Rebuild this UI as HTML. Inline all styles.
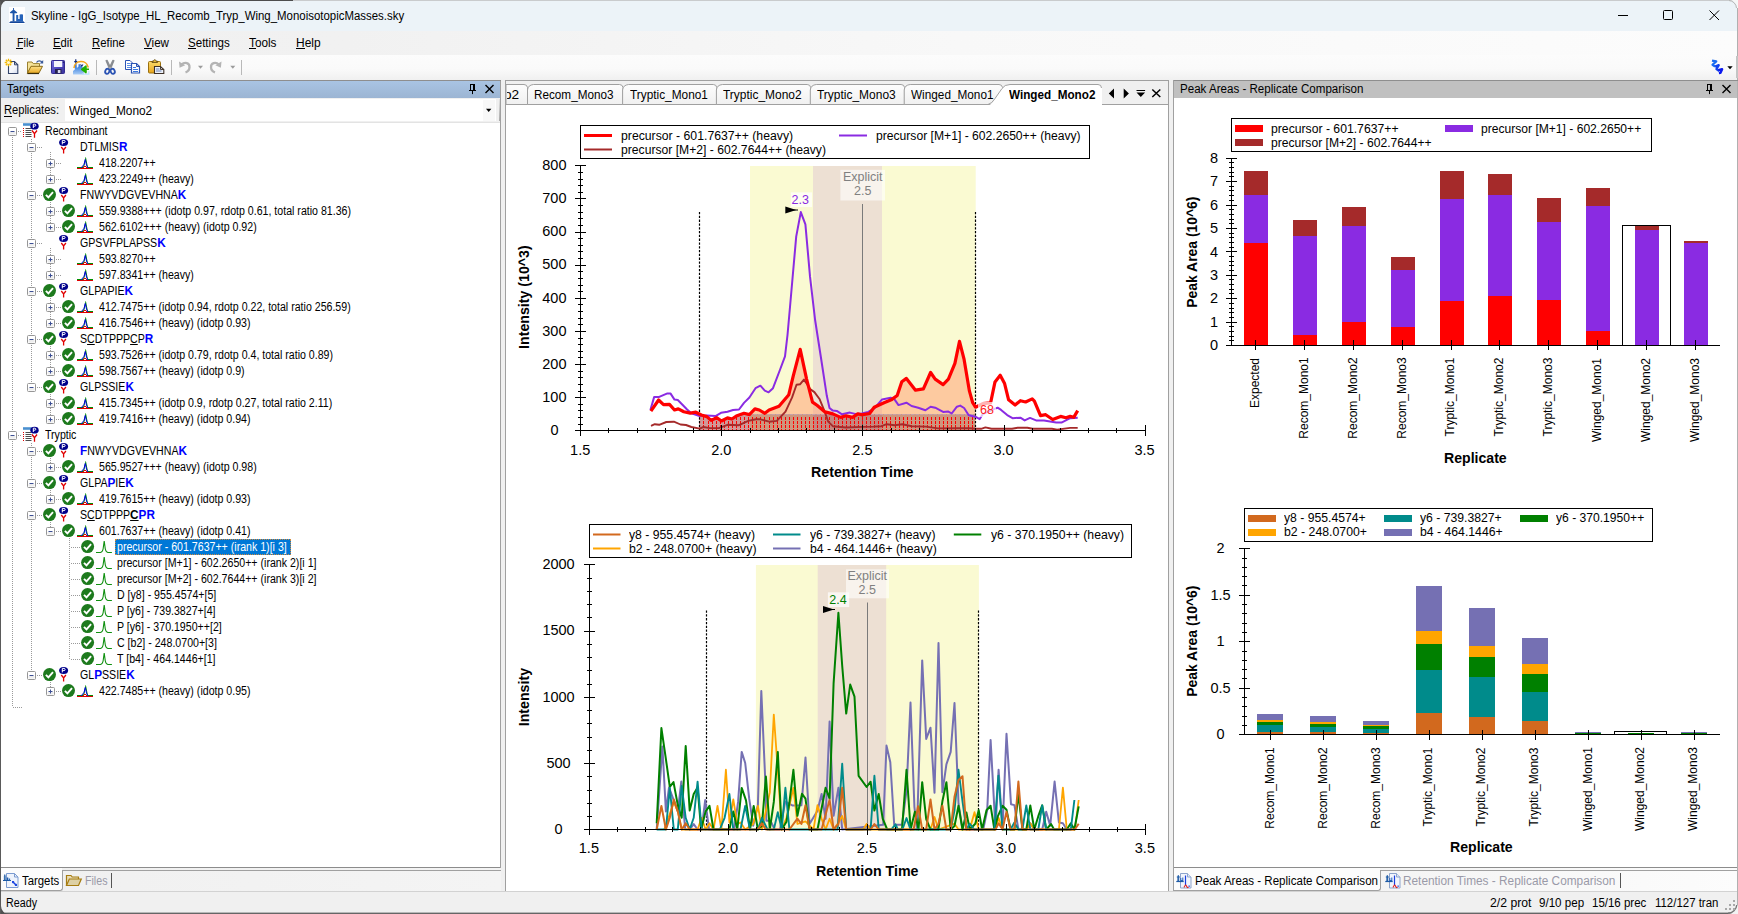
<!DOCTYPE html>
<html><head><meta charset="utf-8"><title>Skyline</title><style>
html,body{margin:0;padding:0;background:#f0f0f0;}
body{width:1738px;height:914px;overflow:hidden;position:relative;font-family:"Liberation Sans",sans-serif;}
.b{position:absolute;box-sizing:border-box;}
.t{position:absolute;white-space:pre;transform-origin:left center;font-family:"Liberation Sans",sans-serif;}
.tr{font-size:12px;line-height:16px;transform:scaleX(0.8835);}
.tr b{font-size:13.3px;}
svg{overflow:visible;}</style></head><body>
<div class="b" style="left:0px;top:0px;width:1738px;height:31px;background:#ecf3f8;"></div>
<div class="b" style="left:0px;top:31px;width:1738px;height:24px;background:linear-gradient(to right,#f0f0f0 0%,#f1f1f1 20%,#f8f8f8 55%,#fcfcfc 100%);"></div>
<div class="b" style="left:0px;top:55px;width:1738px;height:25px;background:linear-gradient(#fcfcfc,#fafafa 55%,#f0f0f0);"></div>
<div class="b" style="left:0px;top:80px;width:1738px;height:834px;background:#f0f0f0;"></div>
<div class="b" style="left:0px;top:891px;width:1738px;height:1px;background:#d2d2d2;"></div>
<div class="b" style="left:0px;top:0px;width:1px;height:914px;background:#5a5a5a;"></div>
<div class="b" style="left:0px;top:0px;width:293px;height:1px;background:#4d4d4d;"></div>
<div class="b" style="left:293px;top:0px;width:1445px;height:1px;background:#c9cbcd;"></div>
<div class="b" style="left:1737px;top:8px;width:1px;height:898px;background:#b0b0b0;"></div>
<div class="b" style="left:5px;top:912px;width:1728px;height:1px;background:#b8b8b8;"></div>
<div class="b" style="left:4px;top:913px;width:1730px;height:1px;background:#666;"></div>
<svg class="b" style="left:0;top:0" width="1738" height="914" viewBox="0 0 1738 914">
<path d="M0 0H9A8 8 0 0 0 1 8V0z" fill="#505050"/>
<path d="M0 914H9A8 8 0 0 1 1 906V914z" fill="#505050"/>
<path d="M1738 0H1729A8 8 0 0 1 1737 8H1738z" fill="#f6f6f6"/><path d="M1729 .5A8 8 0 0 1 1736.500 8" fill="none" stroke="#b5b5b5"/>
<path d="M1738 914H1728A9 9 0 0 0 1737 905H1738z" fill="#f2f2f2"/><path d="M1728 913.200A9 9 0 0 0 1736.800 905" fill="none" stroke="#777" stroke-width="1.400"/>
</svg>
<svg class="b" style="left:0;top:0" width="32" height="31" viewBox="0 0 32 31">
<rect x="9" y="7" width="16" height="17" fill="#fff"/>
<path d="M9 23l1.600-1.700h12.800l1.600 1.700z" fill="#14479a"/>
<rect x="12.600" y="12" width="1.900" height="9.500" fill="#1c56aa"/>
<path d="M9.800 12.400l3.300-2.700h.9l3.300 2.700-.6.800h-6.300z" fill="#1c56aa"/><rect x="13.100" y="8" width=".9" height="2.200" fill="#1c56aa"/>
<path d="M16.200 21.400v-6.300h2v3.800h1.400v-4.300q1.700-.9 3.400 0v6.800z" fill="#2563ba"/>
</svg>
<span class="t" style="left:31.4px;top:8.2px;font-size:12.5px;line-height:16.5px;font-weight:400;color:#000;transform:scaleX(0.9144);">Skyline - IgG_Isotype_HL_Recomb_Tryp_Wing_MonoisotopicMasses.sky</span>
<svg class="b" style="left:1600px;top:0" width="138" height="31" viewBox="0 0 138 31">
<path d="M18 15.5h10" stroke="#000" stroke-width="1"/>
<rect x="63.5" y="10.5" width="9" height="9" rx="1" fill="none" stroke="#000" stroke-width="1"/>
<path d="M109.5 10.5l9.5 9.5M119 10.5l-9.5 9.5" stroke="#000" stroke-width="1"/>
</svg>
<span class="t" style="left:16.5px;top:34.8px;font-size:12.5px;line-height:16.5px;font-weight:400;color:#000;transform:scaleX(0.8583);">File</span>
<div class="b" style="left:16px;top:48px;width:7px;height:1px;background:#000;"></div>
<span class="t" style="left:53.3px;top:34.8px;font-size:12.5px;line-height:16.5px;font-weight:400;color:#000;transform:scaleX(0.9004);">Edit</span>
<div class="b" style="left:53px;top:48px;width:8px;height:1px;background:#000;"></div>
<span class="t" style="left:92.2px;top:34.8px;font-size:12.5px;line-height:16.5px;font-weight:400;color:#000;transform:scaleX(0.9076);">Refine</span>
<div class="b" style="left:92px;top:48px;width:8px;height:1px;background:#000;"></div>
<span class="t" style="left:144.0px;top:34.8px;font-size:12.5px;line-height:16.5px;font-weight:400;color:#000;transform:scaleX(0.9302);">View</span>
<div class="b" style="left:144px;top:48px;width:8px;height:1px;background:#000;"></div>
<span class="t" style="left:188.0px;top:34.8px;font-size:12.5px;line-height:16.5px;font-weight:400;color:#000;transform:scaleX(0.9254);">Settings</span>
<div class="b" style="left:188px;top:48px;width:8px;height:1px;background:#000;"></div>
<span class="t" style="left:249.3px;top:34.8px;font-size:12.5px;line-height:16.5px;font-weight:400;color:#000;transform:scaleX(0.9422);">Tools</span>
<div class="b" style="left:249px;top:48px;width:7px;height:1px;background:#000;"></div>
<span class="t" style="left:296.2px;top:34.8px;font-size:12.5px;line-height:16.5px;font-weight:400;color:#000;transform:scaleX(0.9565);">Help</span>
<div class="b" style="left:296px;top:48px;width:9px;height:1px;background:#000;"></div>
<svg class="b" style="left:0;top:55px" width="260" height="25" viewBox="0 0 260 25">
<defs>
<linearGradient id="gdoc" x1="0" y1="0" x2="1" y2="1"><stop offset="0" stop-color="#fff"/><stop offset=".6" stop-color="#f4f6fb"/><stop offset="1" stop-color="#cfd8ec"/></linearGradient>
<linearGradient id="gfold" x1="0" y1="0" x2="0" y2="1"><stop offset="0" stop-color="#fbe08a"/><stop offset="1" stop-color="#e9a820"/></linearGradient>
<linearGradient id="gsave" x1="0" y1="0" x2="1" y2="1"><stop offset="0" stop-color="#7a74dc"/><stop offset=".5" stop-color="#5048c0"/><stop offset="1" stop-color="#3a329c"/></linearGradient>
<linearGradient id="gsky" x1="0" y1="0" x2="0" y2="1"><stop offset="0" stop-color="#1f4fb8"/><stop offset=".55" stop-color="#4a8ae0"/><stop offset="1" stop-color="#a9cdf6"/></linearGradient>
<linearGradient id="gclip" x1="0" y1="0" x2="0" y2="1"><stop offset="0" stop-color="#fbdc6c"/><stop offset="1" stop-color="#e9a51c"/></linearGradient>
</defs>
<!-- new -->
<path d="M8.500 6.500h6l3.300 3.300v8.700h-9.300z" fill="url(#gdoc)" stroke="#35456b" stroke-width="1.100"/><path d="M14.500 6.500v3.300h3.300" fill="none" stroke="#35456b" stroke-width="1"/>
<path d="M8.500 3.700v7.600M4.700 7.500h7.600M5.800 4.800l5.400 5.400M11.200 4.800l-5.400 5.400" stroke="#f2b800" stroke-width="1.300"/><circle cx="8.500" cy="7.500" r="1.600" fill="#fff6c8"/>
<!-- open -->
<path d="M27.500 17.500v-10.500h4.500l1.200 1.600h6.300v3" fill="#f6e49a" stroke="#9a8030"/><path d="M27.300 18.300l3.700-7h11.500l-3.700 7z" fill="url(#gfold)" stroke="#8a6a14"/><path d="M27.500 18.500h11.500" stroke="#3a2c08" stroke-width="1.200"/>
<path d="M36.500 7.500c1.500-2.300 4.300-2.300 5.800 0" fill="none" stroke="#3a5a9a" stroke-width="1.300"/><path d="M43.200 5v3.600h-3.400z" fill="#3a5a9a"/>
<!-- save -->
<rect x="51.500" y="5.500" width="13" height="13" rx=".8" fill="url(#gsave)" stroke="#342c90"/><rect x="54" y="6" width="8.300" height="6" fill="#f4f5fb"/><rect x="62.800" y="6.500" width="1" height="1.500" fill="#1c1860"/><rect x="55" y="14" width="6.500" height="4.500" fill="#26224e"/><rect x="57.800" y="15" width="2.600" height="3" fill="#d8daf0"/>
<!-- import skyline -->
<path d="M73 19.500v-3.500l1.700-1.200.5-7.300h-.7v-1h.9l.4-2.300.4 2.300h.9v1h-.7l.5 5.500 1.600-1.500v-2.300h1.800v2l1.200-1.500.8.800v1.800l1.500 1v6.200z" fill="url(#gsky)"/><path d="M74.300 6.500h3M75.800 4.200v3.500" stroke="#142c78" stroke-width="1.100"/><path d="M80.500 9.500l1.300 1.500 1.200-1.500" fill="none" stroke="#142c78" stroke-width="1.100"/>
<path d="M74 13c.5-8 12.500-9 14.300-.5" fill="none" stroke="#f5a61c" stroke-width="1.600"/><path d="M82 19.200h6.800v-3" fill="none" stroke="#bfe0ff" stroke-width="1.300"/>
<path d="M89 14.300h-3.500M86 11l-4.300 3.300 4.300 3.300z" fill="#20b000" stroke="#20b000" stroke-width="1.500" stroke-linejoin="round"/>
<!-- sep -->
<path d="M96.500 5v15" stroke="#b9b9b9"/>
<!-- cut -->
<path d="M105.800 5.500l1.500-.3 4 8.500-1.800.8zM114.200 5.500l-1.500-.3-4 8.500 1.800.8z" fill="#8e9196" stroke="#6d7076" stroke-width=".6"/>
<ellipse cx="107.300" cy="16.300" rx="2" ry="2.600" fill="none" stroke="#2c54b4" stroke-width="1.800" transform="rotate(25 107.300 16.300)"/><ellipse cx="112.700" cy="16.300" rx="2" ry="2.600" fill="none" stroke="#2c54b4" stroke-width="1.800" transform="rotate(-25 112.700 16.300)"/>
<!-- copy -->
<path d="M125.500 5.500h4.500l2.500 2.500v6.500h-7z" fill="#fff" stroke="#2c54b4"/><path d="M127 8.500h3.500M127 10.500h4M127 12.500h4" stroke="#5a8ee8"/>
<path d="M131.500 8.500h5l3 3v6.500h-8z" fill="#fff" stroke="#2c54b4" stroke-width="1.200"/><path d="M136.500 8.500v3h3" fill="none" stroke="#2c54b4"/><path d="M133 12.500h3M133 14.500h5M133 16.500h5" stroke="#3a78e0" stroke-width="1.100"/>
<!-- paste -->
<rect x="148.500" y="6.500" width="12" height="11.500" rx="1" fill="url(#gclip)" stroke="#9a7010"/><path d="M152 7.500v-1.300h1.500c0-2 2.500-2 2.500 0h1.500v1.300z" fill="#e8b838" stroke="#5a4410" stroke-width=".8"/>
<path d="M154.500 11.500h6l3.300 3v4h-9.300z" fill="#eef2fa" stroke="#3c3026" stroke-width="1.100"/><path d="M160.500 11.500v3h3.300" fill="none" stroke="#3c3026" stroke-width=".9"/><path d="M156 14h3.500M156 16h5.500" stroke="#6a84b8"/>
<!-- sep -->
<path d="M171.500 5v15" stroke="#b9b9b9"/>
<!-- undo -->
<path d="M181.500 9.800c3.300-3.400 8.300-1.700 8 2.600-.2 2.600-1.800 4.300-4 5" fill="none" stroke="#b4b4b4" stroke-width="2.300"/><path d="M179 6.500l.6 6.300 5.600-2.600z" fill="#b4b4b4"/>
<path d="M198 10.800h5l-2.500 3z" fill="#9c9c9c"/>
<!-- redo -->
<path d="M219 9.800c-3.300-3.400-8.300-1.700-8 2.600.2 2.600 1.800 4.300 4 5" fill="none" stroke="#b4b4b4" stroke-width="2.300"/><path d="M221.500 6.500l-.6 6.300-5.600-2.600z" fill="#b4b4b4"/>
<path d="M230.300 10.800h5l-2.500 3z" fill="#9c9c9c"/>
<path d="M241.500 5v15" stroke="#b9b9b9"/>
</svg>
<svg class="b" style="left:1705px;top:55px" width="33" height="25" viewBox="0 0 33 25">
<path d="M7 5.600l4.300.8-3.800 3.400 2.600 1.800" fill="none" stroke="#1a6cf0" stroke-width="2.200" stroke-linejoin="round"/>
<path d="M10.100 11.600l3.600-1.400-2.200 3.800 2.800 2" fill="none" stroke="#1242ee" stroke-width="2.400" stroke-linejoin="round"/>
<path d="M13.300 15.200l3.800-1-1.600 3.600-1.600 .2" fill="none" stroke="#0a18ee" stroke-width="2.400" stroke-linejoin="round"/>
<path d="M22.300 11.300h5.400l-2.700 3z" fill="#000"/>
<rect x="31" y="1" width="2" height="22" fill="#c4c4c4"/>
</svg>
<div class="b" style="left:1px;top:80px;width:500px;height:1px;background:#8e8e8e;"></div>
<div class="b" style="left:1px;top:81px;width:500px;height:17px;background:linear-gradient(#a9c4e3,#9cb5d3);"></div>
<div class="b" style="left:500px;top:81px;width:1px;height:787px;background:#a0a0a0;"></div>
<span class="t" style="left:6.6px;top:80.8px;font-size:12.5px;line-height:16.5px;font-weight:400;color:#000;transform:scaleX(0.9049);">Targets</span>
<svg class="b" style="left:464px;top:82px" width="34" height="15" viewBox="0 0 34 15">
<path d="M6 2.500h5M6.500 2.500v6M10.500 2.500v6M9.500 2.500v6M5 8.500h7M8.500 8.500v3.600" stroke="#000" fill="none"/>
<path d="M21.500 3l8 8M29.500 3l-8 8" stroke="#000" stroke-width="1.400"/></svg>
<div class="b" style="left:1px;top:98px;width:499px;height:24px;background:#f0f0f0;"></div>
<div class="b" style="left:65px;top:99px;width:431px;height:22px;background:#fff;"></div>
<div class="b" style="left:483px;top:100px;width:12px;height:21px;background:#f8f8f8;"></div>
<div class="b" style="left:499px;top:99px;width:1px;height:22px;background:linear-gradient(#e4e4e4,#a8a8a8);"></div>
<span class="t" style="left:4.2px;top:102.2px;font-size:12.5px;line-height:16.5px;font-weight:400;color:#000;transform:scaleX(0.8893);">Replicates:</span>
<div class="b" style="left:4px;top:116px;width:8px;height:1px;background:#000;"></div>
<span class="t" style="left:69.4px;top:103.2px;font-size:12.5px;line-height:16.5px;font-weight:400;color:#000;transform:scaleX(0.9502);">Winged_Mono2</span>
<svg class="b" style="left:486px;top:108px" width="8" height="5"><path d="M0 .8h5.400l-2.700 3.200z" fill="#000"/></svg>
<div class="b" style="left:1px;top:122px;width:499px;height:746px;background:#fff;"></div>
<div class="b" style="left:1px;top:122px;width:499px;height:1px;background:#e3e3e3;"></div>
<div class="b" style="left:1px;top:867px;width:499px;height:1px;background:#8c8c8c;"></div>
<svg class="b" style="left:0;top:122px" width="500" height="600" viewBox="0 122 500 600"><defs>
<g id="ck"><circle cx="0" cy="0" r="6.500" fill="#1d7a1d"/><path d="M-3.600 .2l2.500 2.600 4.600-5.200" fill="none" stroke="#fff" stroke-width="1.900"/></g>
<g id="mn"><rect x=".5" y=".5" width="8" height="8" rx="1" fill="#fff" stroke="#969696"/><rect x="1.500" y="5" width="6" height="2.500" fill="#ededed"/><path d="M2.500 4.500h4" stroke="#3c4f94" stroke-width="1"/></g>
<g id="pl"><rect x=".5" y=".5" width="8" height="8" rx="1" fill="#fff" stroke="#969696"/><rect x="1.500" y="5" width="6" height="2.500" fill="#ededed"/><path d="M2.500 4.500h4M4.500 2.500v4" stroke="#3c4f94" stroke-width="1"/></g>
<g id="py"><ellipse cx="4.600" cy="3.400" rx="4.500" ry="3.500" fill="#00008b"/><path d="M3.300 5.400v-4h1.700a1.100 1.100 0 0 1 0 2.200h-1.700" fill="none" stroke="#fff" stroke-width="1"/><path d="M2.300 8l2.300 3 2.300-3M4.600 11v3.600" fill="none" stroke="#e00000" stroke-width="1.300"/></g>
<g id="pr"><path d="M0 12.500h16" stroke="#e00000" stroke-width="1"/><path d="M0 11.500h6.500l2-8.500" fill="none" stroke="#009000" stroke-width="1"/><path d="M16 11.500h-5.500l-2-10" fill="none" stroke="#009000" stroke-width="1"/><path d="M4 12l3-3.500 1.300-5 1.200 5.500 1.500 3" fill="none" stroke="#0000e0" stroke-width="1"/><path d="M5.500 12.500l2.500-2.500 2.500 2.500" fill="none" stroke="#e00000" stroke-width="1"/></g>
<g id="tr"><path d="M0 12.500h4.500q2-.3 2.600-3.500l1.100-8 1.100 8q.6 3.200 2.600 3.500h4" fill="none" stroke="#109010" stroke-width="1.100"/></g>
<g id="pg"><path d="M0 1.500h8.500" stroke="#4a90d0" stroke-width="2.600"/><path d="M2.500 5.500h6M2.500 7.500h6M2.500 9.500h6M2.500 11.500h6M2.500 13.500h6" stroke="#4d4d4d" stroke-width="1"/><path d="M.5 5v10" stroke="#e00000" stroke-dasharray="1 1"/><ellipse cx="11.500" cy="3.200" rx="4.200" ry="3.400" fill="#00008b"/><path d="M10.300 5v-3.800h1.500a1 1 0 0 1 0 2h-1.500" fill="none" stroke="#fff" stroke-width="1"/><path d="M9 7.500l2.500 3.200 2.500-3.200M11.500 10.700v4" fill="none" stroke="#e00000" stroke-width="1.300"/></g>
</defs><path d="M12.5 137V707M13 707.5H23M18 131.5H22M37 147.5H42M56 163.5H61M56 179.5H61M37 195.5H43M56 211.5H62M56 227.5H62M37 243.5H42M56 259.5H61M56 275.5H61M37 291.5H43M56 307.5H62M56 323.5H62M37 339.5H43M56 355.5H62M56 371.5H62M37 387.5H43M56 403.5H62M56 419.5H62M18 435.5H22M37 451.5H43M56 467.5H62M37 483.5H43M56 499.5H62M37 515.5H43M56 531.5H62M71 547.5H80M71 563.5H80M71 579.5H80M71 595.5H80M71 611.5H80M71 627.5H80M71 643.5H80M71 659.5H80M37 675.5H43M56 691.5H62M31.5 139V383M50.5 152V175M50.5 200V223M50.5 248V271M50.5 296V319M50.5 344V367M50.5 392V415M31.5 443V671M50.5 456V463M50.5 488V495M50.5 520V527M69.5 538V659.5M50.5 680V687" stroke="#9a9a9a" stroke-width="1" stroke-dasharray="1 1" fill="none"/><use href="#mn" x="8" y="127"/><use href="#pg" x="23" y="123"/><use href="#mn" x="27" y="143"/><use href="#py" x="59" y="139"/><use href="#pl" x="46" y="159"/><use href="#pr" x="77" y="156"/><use href="#pl" x="46" y="175"/><use href="#pr" x="77" y="172"/><use href="#mn" x="27" y="191"/><use href="#ck" x="49.5" y="194.6"/><use href="#py" x="59" y="187"/><use href="#pl" x="46" y="207"/><use href="#ck" x="68.5" y="210.6"/><use href="#pr" x="77" y="204"/><use href="#pl" x="46" y="223"/><use href="#ck" x="68.5" y="226.6"/><use href="#pr" x="77" y="220"/><use href="#mn" x="27" y="239"/><use href="#py" x="59" y="235"/><use href="#pl" x="46" y="255"/><use href="#pr" x="77" y="252"/><use href="#pl" x="46" y="271"/><use href="#pr" x="77" y="268"/><use href="#mn" x="27" y="287"/><use href="#ck" x="49.5" y="290.6"/><use href="#py" x="59" y="283"/><use href="#pl" x="46" y="303"/><use href="#ck" x="68.5" y="306.6"/><use href="#pr" x="77" y="300"/><use href="#pl" x="46" y="319"/><use href="#ck" x="68.5" y="322.6"/><use href="#pr" x="77" y="316"/><use href="#mn" x="27" y="335"/><use href="#ck" x="49.5" y="338.6"/><use href="#py" x="59" y="331"/><use href="#pl" x="46" y="351"/><use href="#ck" x="68.5" y="354.6"/><use href="#pr" x="77" y="348"/><use href="#pl" x="46" y="367"/><use href="#ck" x="68.5" y="370.6"/><use href="#pr" x="77" y="364"/><use href="#mn" x="27" y="383"/><use href="#ck" x="49.5" y="386.6"/><use href="#py" x="59" y="379"/><use href="#pl" x="46" y="399"/><use href="#ck" x="68.5" y="402.6"/><use href="#pr" x="77" y="396"/><use href="#pl" x="46" y="415"/><use href="#ck" x="68.5" y="418.6"/><use href="#pr" x="77" y="412"/><use href="#mn" x="8" y="431"/><use href="#pg" x="23" y="427"/><use href="#mn" x="27" y="447"/><use href="#ck" x="49.5" y="450.6"/><use href="#py" x="59" y="443"/><use href="#pl" x="46" y="463"/><use href="#ck" x="68.5" y="466.6"/><use href="#pr" x="77" y="460"/><use href="#mn" x="27" y="479"/><use href="#ck" x="49.5" y="482.6"/><use href="#py" x="59" y="475"/><use href="#pl" x="46" y="495"/><use href="#ck" x="68.5" y="498.6"/><use href="#pr" x="77" y="492"/><use href="#mn" x="27" y="511"/><use href="#ck" x="49.5" y="514.6"/><use href="#py" x="59" y="507"/><use href="#mn" x="46" y="527"/><use href="#ck" x="68.5" y="530.6"/><use href="#pr" x="77" y="524"/><use href="#ck" x="87.6" y="546.6"/><use href="#tr" x="96" y="540"/><use href="#ck" x="87.6" y="562.6"/><use href="#tr" x="96" y="556"/><use href="#ck" x="87.6" y="578.6"/><use href="#tr" x="96" y="572"/><use href="#ck" x="87.6" y="594.6"/><use href="#tr" x="96" y="588"/><use href="#ck" x="87.6" y="610.6"/><use href="#tr" x="96" y="604"/><use href="#ck" x="87.6" y="626.6"/><use href="#tr" x="96" y="620"/><use href="#ck" x="87.6" y="642.6"/><use href="#tr" x="96" y="636"/><use href="#ck" x="87.6" y="658.6"/><use href="#tr" x="96" y="652"/><use href="#mn" x="27" y="671"/><use href="#ck" x="49.5" y="674.6"/><use href="#py" x="59" y="667"/><use href="#pl" x="46" y="687"/><use href="#ck" x="68.5" y="690.6"/><use href="#pr" x="77" y="684"/></svg>
<span class="t tr" style="left:44.8px;top:123px;color:#000">Recombinant</span>
<span class="t tr" style="left:80px;top:139px;color:#000">DTLMIS<b style="color:#00f">R</b></span>
<span class="t tr" style="left:99px;top:155px;color:#000">418.2207++</span>
<span class="t tr" style="left:99px;top:171px;color:#000">423.2249++ (heavy)</span>
<span class="t tr" style="left:80px;top:187px;color:#000">FNWYVDGVEVHNA<b style="color:#00f">K</b></span>
<span class="t tr" style="left:99px;top:203px;color:#000">559.9388+++ (idotp 0.97, rdotp 0.61, total ratio 81.36)</span>
<span class="t tr" style="left:99px;top:219px;color:#000">562.6102+++ (heavy) (idotp 0.92)</span>
<span class="t tr" style="left:80px;top:235px;color:#000">GPSVFPLAPSS<b style="color:#00f">K</b></span>
<span class="t tr" style="left:99px;top:251px;color:#000">593.8270++</span>
<span class="t tr" style="left:99px;top:267px;color:#000">597.8341++ (heavy)</span>
<span class="t tr" style="left:80px;top:283px;color:#000">GLPAPIE<b style="color:#00f">K</b></span>
<span class="t tr" style="left:99px;top:299px;color:#000">412.7475++ (idotp 0.94, rdotp 0.22, total ratio 256.59)</span>
<span class="t tr" style="left:99px;top:315px;color:#000">416.7546++ (heavy) (idotp 0.93)</span>
<span class="t tr" style="left:80px;top:331px;color:#000">S<u>C</u>DTPPP<u>C</u>P<b style="color:#00f">R</b></span>
<span class="t tr" style="left:99px;top:347px;color:#000">593.7526++ (idotp 0.79, rdotp 0.4, total ratio 0.89)</span>
<span class="t tr" style="left:99px;top:363px;color:#000">598.7567++ (heavy) (idotp 0.9)</span>
<span class="t tr" style="left:80px;top:379px;color:#000">GLPSSIE<b style="color:#00f">K</b></span>
<span class="t tr" style="left:99px;top:395px;color:#000">415.7345++ (idotp 0.9, rdotp 0.27, total ratio 2.11)</span>
<span class="t tr" style="left:99px;top:411px;color:#000">419.7416++ (heavy) (idotp 0.94)</span>
<span class="t tr" style="left:44.8px;top:427px;color:#000">Tryptic</span>
<span class="t tr" style="left:80px;top:443px;color:#000"><b style="color:#00f">F</b>NWYVDGVEVHNA<b style="color:#00f">K</b></span>
<span class="t tr" style="left:99px;top:459px;color:#000">565.9527+++ (heavy) (idotp 0.98)</span>
<span class="t tr" style="left:80px;top:475px;color:#000">GLPA<b style="color:#00f">P</b>IE<b style="color:#00f">K</b></span>
<span class="t tr" style="left:99px;top:491px;color:#000">419.7615++ (heavy) (idotp 0.93)</span>
<span class="t tr" style="left:80px;top:507px;color:#000">S<u>C</u>DTPPP<b><u>C</u></b><b style="color:#00f">PR</b></span>
<span class="t tr" style="left:99px;top:523px;color:#000">601.7637++ (heavy) (idotp 0.41)</span>
<div class="b" style="left:115px;top:539px;width:176px;height:16px;background:#0078d7;outline:1px dotted #d28a3c;outline-offset:-1px;"></div>
<span class="t tr" style="left:117.4px;top:539px;color:#fff">precursor - 601.7637++ (irank 1)[i 3]</span>
<span class="t tr" style="left:117.4px;top:555px;color:#000">precursor [M+1] - 602.2650++ (irank 2)[i 1]</span>
<span class="t tr" style="left:117.4px;top:571px;color:#000">precursor [M+2] - 602.7644++ (irank 3)[i 2]</span>
<span class="t tr" style="left:117.4px;top:587px;color:#000">D [y8] - 955.4574+[5]</span>
<span class="t tr" style="left:117.4px;top:603px;color:#000">P [y6] - 739.3827+[4]</span>
<span class="t tr" style="left:117.4px;top:619px;color:#000">P [y6] - 370.1950++[2]</span>
<span class="t tr" style="left:117.4px;top:635px;color:#000">C [b2] - 248.0700+[3]</span>
<span class="t tr" style="left:117.4px;top:651px;color:#000">T [b4] - 464.1446+[1]</span>
<span class="t tr" style="left:80px;top:667px;color:#000">GL<b style="color:#00f">P</b>SSIE<b style="color:#00f">K</b></span>
<span class="t tr" style="left:99px;top:683px;color:#000">422.7485++ (heavy) (idotp 0.95)</span>
<div class="b" style="left:1px;top:868px;width:500px;height:23px;background:linear-gradient(to right,#f0f0f0,#f4f4f4);"></div>
<div class="b" style="left:1px;top:870px;width:500px;height:1px;background:#a0a0a0;"></div>
<div class="b" style="left:1px;top:868px;width:61px;height:3px;background:#fcfcfc;"></div>
<div class="b" style="left:1px;top:870px;width:62px;height:21px;background:#fcfcfc;border-right:1px solid #a0a0a0;border-bottom:1px solid #a0a0a0;border-radius:0 0 3px 0;"></div>
<svg class="b" style="left:2px;top:872px" width="18" height="17" viewBox="0 0 18 17">
<path d="M4.500 1.500h8l3.500 3.500v10.500h-11.500z" fill="#eef3fc" stroke="#7b9bd0"/><path d="M12.500 1.500v3.500h3.500" fill="none" stroke="#7b9bd0"/>
<path d="M1 8.500h8" stroke="#1c5aa6"/><path d="M2.800 2.500l.5 1.500v4h-1v-4z" fill="#1c5aa6" stroke="#1c5aa6" stroke-width=".6"/><rect x="4.800" y="5.500" width="1.500" height="3" fill="#1c5aa6"/><rect x="6.800" y="6.500" width="1.300" height="2" fill="#2a6ab8"/>
<path d="M10.500 9.500l4 4" stroke="#1a44e0" stroke-width="1.600"/><path d="M10 9h2.500l-2.500 2.500zM15 14h-2.500l2.500-2.500z" fill="#1a44e0"/></svg>
<span class="t" style="left:21.7px;top:872.8px;font-size:12.5px;line-height:16.5px;font-weight:400;color:#000;transform:scaleX(0.9098);">Targets</span>
<svg class="b" style="left:65px;top:873px" width="18" height="15" viewBox="0 0 18 15">
<path d="M1.500 12.500v-10h4.500l1.200 1.500h6.300v2" fill="#e8dcb8" stroke="#a67c10" stroke-width="1.200"/><path d="M1.500 12.500l2.800-6.500h12l-2.800 6.500z" fill="#ddd0a4" stroke="#a67c10" stroke-width="1.200"/></svg>
<span class="t" style="left:84.5px;top:872.8px;font-size:12.5px;line-height:16.5px;font-weight:400;color:#9a9aa8;transform:scaleX(0.8521);">Files</span>
<div class="b" style="left:111px;top:873px;width:1px;height:15px;background:#555;"></div>
<span class="t" style="left:5.6px;top:894.8px;font-size:12.5px;line-height:16.5px;font-weight:400;color:#000;transform:scaleX(0.8578);">Ready</span>
<div class="b" style="left:505px;top:80px;width:664px;height:1px;background:#a0a0a0;"></div>
<div class="b" style="left:505px;top:80px;width:1px;height:811px;background:#a0a0a0;"></div>
<div class="b" style="left:1168px;top:80px;width:1px;height:811px;background:#a0a0a0;"></div>
<div class="b" style="left:506px;top:81px;width:662px;height:24px;background:#f0f0f0;"></div>
<div class="b" style="left:506px;top:105px;width:662px;height:786px;background:#fff;"></div>
<svg class="b" style="left:506px;top:81px" width="662" height="25" viewBox="506 81 662 25"><defs><linearGradient id="tg" x1="0" y1="0" x2="0" y2="1"><stop offset="0" stop-color="#fdfdfd"/><stop offset="1" stop-color="#f0f0f0"/></linearGradient></defs><path d="M506 104.500H1168" stroke="#a0a0a0"/><path d="M506 84.500H524q3 0 3.500 3V104.500H506z" fill="url(#tg)" stroke="#a0a0a0"/><path d="M527.5 104.500V90q.5-5 6-5.500H619.5q3 0 3.500 3V104.500z" fill="url(#tg)" stroke="#a0a0a0"/><path d="M622.6 104.500V90q.5-5 6-5.500H713.3q3 0 3.500 3V104.500z" fill="url(#tg)" stroke="#a0a0a0"/><path d="M716.4 104.500V90q.5-5 6-5.500H807.2q3 0 3.500 3V104.500z" fill="url(#tg)" stroke="#a0a0a0"/><path d="M810.3 104.500V90q.5-5 6-5.500H901.1q3 0 3.500 3V104.500z" fill="url(#tg)" stroke="#a0a0a0"/><path d="M904.2 104.500V90q.5-5 6-5.500H999.0q3 0 3.500 3V104.500z" fill="url(#tg)" stroke="#a0a0a0"/><path d="M988 105.500q4-1 7-6l7-11q2.500-4 8-4H1098q4 0 4 4V105.500z" fill="#fff" stroke="none"/><path d="M988 104.500q4-1 7-6l7-10q2.500-4 8-4H1098q3.500 0 3.500 3.500" fill="none" stroke="#a0a0a0"/><path d="M1114 88.500v10l-5.200-5zM1123.700 88.500v10l5.200-5zM1136.500 90h8.600v1h-8.600zM1136.500 92.500h8.600l-4.300 4.400z" fill="#000"/><path d="M1152.300 89.500l8 7.500M1160.300 89.500l-8 7.500" stroke="#000" stroke-width="1.500"/></svg>
<div class="b" style="left:507px;top:85px;width:20px;height:19px;overflow:hidden"><span class="t" style="left:-3.2px;top:2.2px;font-size:12.5px;line-height:16.5px;font-weight:400;color:#000;transform:scaleX(1.0930);">o2</span></div>
<span class="t" style="left:534.4px;top:87.2px;font-size:12.5px;line-height:16.5px;font-weight:400;color:#000;transform:scaleX(0.9379);">Recom_Mono3</span>
<span class="t" style="left:629.5px;top:87.2px;font-size:12.5px;line-height:16.5px;font-weight:400;color:#000;transform:scaleX(0.9475);">Tryptic_Mono1</span>
<span class="t" style="left:723.4px;top:87.2px;font-size:12.5px;line-height:16.5px;font-weight:400;color:#000;transform:scaleX(0.9560);">Tryptic_Mono2</span>
<span class="t" style="left:817.3px;top:87.2px;font-size:12.5px;line-height:16.5px;font-weight:400;color:#000;transform:scaleX(0.9572);">Tryptic_Mono3</span>
<span class="t" style="left:911.2px;top:87.2px;font-size:12.5px;line-height:16.5px;font-weight:400;color:#000;transform:scaleX(0.9422);">Winged_Mono1</span>
<span class="t" style="left:1009.4px;top:87.2px;font-size:12.5px;line-height:16.5px;font-weight:700;color:#000;transform:scaleX(0.9366);">Winged_Mono2</span>
<svg class="b" style="left:506px;top:104px" width="663" height="390" viewBox="506 104 663 390"><rect x="750" y="166" width="225.700" height="264.500" fill="#fafad2"/><rect x="813" y="166" width="69" height="264.500" fill="#ede0d3"/><path d="M862.5 204V430" stroke="#7a7a7a" stroke-width="1"/><clipPath id="cpA"><rect x="690" y="160" width="300" height="254"/></clipPath><polygon clip-path="url(#cpA)" points="699.5,414.1 701.3,415.0 706.8,416.6 711.1,420.4 716.6,417.7 721.5,421.0 727.5,417.9 731.9,419.0 736.3,416.1 744.0,413.3 749.4,414.6 754.9,408.9 759.3,410.0 764.8,413.3 769.1,410.0 779.0,406.2 788.8,394.7 793.2,376.1 800.2,349.4 806.6,379.1 812.5,402.1 817.0,405.3 825.0,411.9 832.8,413.9 840.7,417.4 846.0,415.8 852.5,417.4 857.8,413.9 861.7,414.8 869.6,413.5 874.2,407.3 884.0,402.7 891.9,399.4 897.2,395.5 901.8,381.7 906.4,378.4 915.5,390.2 923.4,388.9 930.6,372.5 935.2,379.1 943.1,384.6 948.4,379.1 954.9,363.3 959.5,341.3 964.1,359.4 969.4,390.9 972.7,402.7 975.3,406.9 975.3,430.5 699.5,430.5" fill="#ff9a6e" fill-opacity=".5"/><clipPath id="cpB"><polygon points="699.5,414.1 700.1,414.4 700.7,414.7 701.3,415.0 701.8,415.1 702.3,415.3 702.8,415.4 703.3,415.6 703.8,415.7 704.3,415.9 704.8,416.0 705.3,416.2 705.8,416.3 706.3,416.5 706.8,416.6 707.3,417.1 707.9,417.6 708.4,418.0 709.0,418.5 709.5,419.0 710.0,419.4 710.6,419.9 711.1,420.4 711.6,420.2 712.1,419.9 712.6,419.7 713.1,419.4 713.6,419.2 714.1,418.9 714.6,418.7 715.1,418.4 715.6,418.2 716.1,417.9 716.6,417.7 717.1,418.1 717.7,418.4 718.2,418.8 718.8,419.2 719.3,419.5 719.9,419.9 720.4,420.3 721.0,420.6 721.5,421.0 722.0,420.7 722.5,420.5 723.0,420.2 723.5,420.0 724.0,419.7 724.5,419.4 725.0,419.2 725.5,418.9 726.0,418.7 726.5,418.4 727.0,418.2 727.5,417.9 728.0,418.0 728.6,418.2 729.1,418.3 729.7,418.4 730.2,418.6 730.8,418.7 731.4,418.9 731.9,419.0 732.4,418.6 733.0,418.3 733.5,417.9 734.1,417.6 734.6,417.2 735.2,416.8 735.8,416.5 736.3,416.1 736.8,415.9 737.3,415.7 737.8,415.5 738.4,415.4 738.9,415.2 739.4,415.0 739.9,414.8 740.4,414.6 740.9,414.4 741.4,414.2 741.9,414.0 742.5,414.0 743.0,414.0 743.5,414.0 744.0,414.0 744.5,414.0 745.1,414.0 745.6,414.0 746.2,414.0 746.7,414.0 747.2,414.1 747.8,414.2 748.3,414.3 748.9,414.5 749.4,414.6 749.9,414.1 750.4,414.0 750.9,414.0 751.4,414.0 751.9,414.0 752.4,414.0 752.9,414.0 753.4,414.0 753.9,414.0 754.4,414.0 754.9,414.0 755.4,414.0 756.0,414.0 756.5,414.0 757.1,414.0 757.6,414.0 758.2,414.0 758.8,414.0 759.3,414.0 759.8,414.0 760.3,414.0 760.8,414.0 761.3,414.0 761.8,414.0 762.3,414.0 762.8,414.0 763.3,414.0 763.8,414.0 764.3,414.0 764.8,414.0 765.3,414.0 765.9,414.0 766.4,414.0 767.0,414.0 767.5,414.0 768.0,414.0 768.6,414.0 769.1,414.0 769.6,414.0 770.1,414.0 770.7,414.0 771.2,414.0 771.7,414.0 772.2,414.0 772.7,414.0 773.3,414.0 773.8,414.0 774.3,414.0 774.8,414.0 775.4,414.0 775.9,414.0 776.4,414.0 776.9,414.0 777.4,414.0 778.0,414.0 778.5,414.0 779.0,414.0 779.5,414.0 780.0,414.0 780.5,414.0 781.1,414.0 781.6,414.0 782.1,414.0 782.6,414.0 783.1,414.0 783.6,414.0 784.2,414.0 784.7,414.0 785.2,414.0 785.7,414.0 786.2,414.0 786.7,414.0 787.3,414.0 787.8,414.0 788.3,414.0 788.8,414.0 789.3,414.0 789.9,414.0 790.5,414.0 791.0,414.0 791.5,414.0 792.1,414.0 792.7,414.0 793.2,414.0 793.7,414.0 794.2,414.0 794.7,414.0 795.2,414.0 795.7,414.0 796.2,414.0 796.7,414.0 797.2,414.0 797.7,414.0 798.2,414.0 798.7,414.0 799.2,414.0 799.7,414.0 800.2,414.0 800.7,414.0 801.3,414.0 801.8,414.0 802.3,414.0 802.9,414.0 803.4,414.0 803.9,414.0 804.5,414.0 805.0,414.0 805.5,414.0 806.1,414.0 806.6,414.0 807.1,414.0 807.7,414.0 808.2,414.0 808.7,414.0 809.3,414.0 809.8,414.0 810.4,414.0 810.9,414.0 811.4,414.0 812.0,414.0 812.5,414.0 813.0,414.0 813.5,414.0 814.0,414.0 814.5,414.0 815.0,414.0 815.5,414.0 816.0,414.0 816.5,414.0 817.0,414.0 817.5,414.0 818.0,414.0 818.5,414.0 819.0,414.0 819.5,414.0 820.0,414.0 820.5,414.0 821.0,414.0 821.5,414.0 822.0,414.0 822.5,414.0 823.0,414.0 823.5,414.0 824.0,414.0 824.5,414.0 825.0,414.0 825.5,414.0 826.0,414.0 826.6,414.0 827.1,414.0 827.6,414.0 828.1,414.0 828.6,414.0 829.2,414.0 829.7,414.0 830.2,414.0 830.7,414.0 831.2,414.0 831.8,414.0 832.3,414.0 832.8,414.0 833.3,414.1 833.9,414.4 834.4,414.6 834.9,414.8 835.4,415.1 836.0,415.3 836.5,415.5 837.0,415.8 837.5,416.0 838.1,416.2 838.6,416.5 839.1,416.7 839.6,416.9 840.2,417.2 840.7,417.4 841.2,417.2 841.8,417.1 842.3,416.9 842.8,416.8 843.4,416.6 843.9,416.4 844.4,416.3 844.9,416.1 845.5,416.0 846.0,415.8 846.5,415.9 847.0,416.0 847.5,416.2 848.0,416.3 848.5,416.4 849.0,416.5 849.5,416.7 850.0,416.8 850.5,416.9 851.0,417.0 851.5,417.2 852.0,417.3 852.5,417.4 853.0,417.0 853.6,416.7 854.1,416.3 854.6,416.0 855.1,415.6 855.7,415.3 856.2,414.9 856.7,414.6 857.3,414.2 857.8,414.0 858.4,414.0 858.9,414.2 859.5,414.3 860.0,414.4 860.6,414.5 861.1,414.7 861.7,414.8 862.2,414.7 862.8,414.6 863.3,414.5 863.8,414.5 864.3,414.4 864.9,414.3 865.4,414.2 865.9,414.1 866.4,414.0 867.0,414.0 867.5,414.0 868.0,414.0 868.5,414.0 869.1,414.0 869.6,414.0 870.1,414.0 870.6,414.0 871.1,414.0 871.6,414.0 872.2,414.0 872.7,414.0 873.2,414.0 873.7,414.0 874.2,414.0 874.7,414.0 875.2,414.0 875.7,414.0 876.3,414.0 876.8,414.0 877.3,414.0 877.8,414.0 878.3,414.0 878.8,414.0 879.4,414.0 879.9,414.0 880.4,414.0 880.9,414.0 881.4,414.0 881.9,414.0 882.5,414.0 883.0,414.0 883.5,414.0 884.0,414.0 884.5,414.0 885.1,414.0 885.6,414.0 886.1,414.0 886.6,414.0 887.2,414.0 887.7,414.0 888.2,414.0 888.7,414.0 889.3,414.0 889.8,414.0 890.3,414.0 890.8,414.0 891.4,414.0 891.9,414.0 892.4,414.0 893.0,414.0 893.5,414.0 894.0,414.0 894.5,414.0 895.1,414.0 895.6,414.0 896.1,414.0 896.7,414.0 897.2,414.0 897.7,414.0 898.2,414.0 898.7,414.0 899.2,414.0 899.8,414.0 900.3,414.0 900.8,414.0 901.3,414.0 901.8,414.0 902.3,414.0 902.8,414.0 903.3,414.0 903.8,414.0 904.4,414.0 904.9,414.0 905.4,414.0 905.9,414.0 906.4,414.0 906.9,414.0 907.4,414.0 907.9,414.0 908.4,414.0 908.9,414.0 909.4,414.0 909.9,414.0 910.4,414.0 911.0,414.0 911.5,414.0 912.0,414.0 912.5,414.0 913.0,414.0 913.5,414.0 914.0,414.0 914.5,414.0 915.0,414.0 915.5,414.0 916.0,414.0 916.6,414.0 917.1,414.0 917.6,414.0 918.1,414.0 918.7,414.0 919.2,414.0 919.7,414.0 920.2,414.0 920.8,414.0 921.3,414.0 921.8,414.0 922.3,414.0 922.9,414.0 923.4,414.0 923.9,414.0 924.4,414.0 924.9,414.0 925.5,414.0 926.0,414.0 926.5,414.0 927.0,414.0 927.5,414.0 928.0,414.0 928.5,414.0 929.1,414.0 929.6,414.0 930.1,414.0 930.6,414.0 931.1,414.0 931.6,414.0 932.1,414.0 932.6,414.0 933.2,414.0 933.7,414.0 934.2,414.0 934.7,414.0 935.2,414.0 935.7,414.0 936.3,414.0 936.8,414.0 937.3,414.0 937.8,414.0 938.4,414.0 938.9,414.0 939.4,414.0 939.9,414.0 940.5,414.0 941.0,414.0 941.5,414.0 942.0,414.0 942.6,414.0 943.1,414.0 943.6,414.0 944.2,414.0 944.7,414.0 945.2,414.0 945.8,414.0 946.3,414.0 946.8,414.0 947.3,414.0 947.9,414.0 948.4,414.0 948.9,414.0 949.4,414.0 949.9,414.0 950.4,414.0 950.9,414.0 951.4,414.0 951.9,414.0 952.4,414.0 952.9,414.0 953.4,414.0 953.9,414.0 954.4,414.0 954.9,414.0 955.4,414.0 955.9,414.0 956.4,414.0 956.9,414.0 957.5,414.0 958.0,414.0 958.5,414.0 959.0,414.0 959.5,414.0 960.0,414.0 960.5,414.0 961.0,414.0 961.5,414.0 962.1,414.0 962.6,414.0 963.1,414.0 963.6,414.0 964.1,414.0 964.6,414.0 965.2,414.0 965.7,414.0 966.2,414.0 966.8,414.0 967.3,414.0 967.8,414.0 968.3,414.0 968.9,414.0 969.4,414.0 970.0,414.0 970.5,414.0 971.0,414.0 971.6,414.0 972.2,414.0 972.7,414.0 973.2,414.0 973.7,414.0 974.3,414.0 974.8,414.0 975.3,414.0 975.3,430.5 699.5,430.5"/></clipPath><polygon points="699.5,414.1 700.1,414.4 700.7,414.7 701.3,415.0 701.8,415.1 702.3,415.3 702.8,415.4 703.3,415.6 703.8,415.7 704.3,415.9 704.8,416.0 705.3,416.2 705.8,416.3 706.3,416.5 706.8,416.6 707.3,417.1 707.9,417.6 708.4,418.0 709.0,418.5 709.5,419.0 710.0,419.4 710.6,419.9 711.1,420.4 711.6,420.2 712.1,419.9 712.6,419.7 713.1,419.4 713.6,419.2 714.1,418.9 714.6,418.7 715.1,418.4 715.6,418.2 716.1,417.9 716.6,417.7 717.1,418.1 717.7,418.4 718.2,418.8 718.8,419.2 719.3,419.5 719.9,419.9 720.4,420.3 721.0,420.6 721.5,421.0 722.0,420.7 722.5,420.5 723.0,420.2 723.5,420.0 724.0,419.7 724.5,419.4 725.0,419.2 725.5,418.9 726.0,418.7 726.5,418.4 727.0,418.2 727.5,417.9 728.0,418.0 728.6,418.2 729.1,418.3 729.7,418.4 730.2,418.6 730.8,418.7 731.4,418.9 731.9,419.0 732.4,418.6 733.0,418.3 733.5,417.9 734.1,417.6 734.6,417.2 735.2,416.8 735.8,416.5 736.3,416.1 736.8,415.9 737.3,415.7 737.8,415.5 738.4,415.4 738.9,415.2 739.4,415.0 739.9,414.8 740.4,414.6 740.9,414.4 741.4,414.2 741.9,414.0 742.5,414.0 743.0,414.0 743.5,414.0 744.0,414.0 744.5,414.0 745.1,414.0 745.6,414.0 746.2,414.0 746.7,414.0 747.2,414.1 747.8,414.2 748.3,414.3 748.9,414.5 749.4,414.6 749.9,414.1 750.4,414.0 750.9,414.0 751.4,414.0 751.9,414.0 752.4,414.0 752.9,414.0 753.4,414.0 753.9,414.0 754.4,414.0 754.9,414.0 755.4,414.0 756.0,414.0 756.5,414.0 757.1,414.0 757.6,414.0 758.2,414.0 758.8,414.0 759.3,414.0 759.8,414.0 760.3,414.0 760.8,414.0 761.3,414.0 761.8,414.0 762.3,414.0 762.8,414.0 763.3,414.0 763.8,414.0 764.3,414.0 764.8,414.0 765.3,414.0 765.9,414.0 766.4,414.0 767.0,414.0 767.5,414.0 768.0,414.0 768.6,414.0 769.1,414.0 769.6,414.0 770.1,414.0 770.7,414.0 771.2,414.0 771.7,414.0 772.2,414.0 772.7,414.0 773.3,414.0 773.8,414.0 774.3,414.0 774.8,414.0 775.4,414.0 775.9,414.0 776.4,414.0 776.9,414.0 777.4,414.0 778.0,414.0 778.5,414.0 779.0,414.0 779.5,414.0 780.0,414.0 780.5,414.0 781.1,414.0 781.6,414.0 782.1,414.0 782.6,414.0 783.1,414.0 783.6,414.0 784.2,414.0 784.7,414.0 785.2,414.0 785.7,414.0 786.2,414.0 786.7,414.0 787.3,414.0 787.8,414.0 788.3,414.0 788.8,414.0 789.3,414.0 789.9,414.0 790.5,414.0 791.0,414.0 791.5,414.0 792.1,414.0 792.7,414.0 793.2,414.0 793.7,414.0 794.2,414.0 794.7,414.0 795.2,414.0 795.7,414.0 796.2,414.0 796.7,414.0 797.2,414.0 797.7,414.0 798.2,414.0 798.7,414.0 799.2,414.0 799.7,414.0 800.2,414.0 800.7,414.0 801.3,414.0 801.8,414.0 802.3,414.0 802.9,414.0 803.4,414.0 803.9,414.0 804.5,414.0 805.0,414.0 805.5,414.0 806.1,414.0 806.6,414.0 807.1,414.0 807.7,414.0 808.2,414.0 808.7,414.0 809.3,414.0 809.8,414.0 810.4,414.0 810.9,414.0 811.4,414.0 812.0,414.0 812.5,414.0 813.0,414.0 813.5,414.0 814.0,414.0 814.5,414.0 815.0,414.0 815.5,414.0 816.0,414.0 816.5,414.0 817.0,414.0 817.5,414.0 818.0,414.0 818.5,414.0 819.0,414.0 819.5,414.0 820.0,414.0 820.5,414.0 821.0,414.0 821.5,414.0 822.0,414.0 822.5,414.0 823.0,414.0 823.5,414.0 824.0,414.0 824.5,414.0 825.0,414.0 825.5,414.0 826.0,414.0 826.6,414.0 827.1,414.0 827.6,414.0 828.1,414.0 828.6,414.0 829.2,414.0 829.7,414.0 830.2,414.0 830.7,414.0 831.2,414.0 831.8,414.0 832.3,414.0 832.8,414.0 833.3,414.1 833.9,414.4 834.4,414.6 834.9,414.8 835.4,415.1 836.0,415.3 836.5,415.5 837.0,415.8 837.5,416.0 838.1,416.2 838.6,416.5 839.1,416.7 839.6,416.9 840.2,417.2 840.7,417.4 841.2,417.2 841.8,417.1 842.3,416.9 842.8,416.8 843.4,416.6 843.9,416.4 844.4,416.3 844.9,416.1 845.5,416.0 846.0,415.8 846.5,415.9 847.0,416.0 847.5,416.2 848.0,416.3 848.5,416.4 849.0,416.5 849.5,416.7 850.0,416.8 850.5,416.9 851.0,417.0 851.5,417.2 852.0,417.3 852.5,417.4 853.0,417.0 853.6,416.7 854.1,416.3 854.6,416.0 855.1,415.6 855.7,415.3 856.2,414.9 856.7,414.6 857.3,414.2 857.8,414.0 858.4,414.0 858.9,414.2 859.5,414.3 860.0,414.4 860.6,414.5 861.1,414.7 861.7,414.8 862.2,414.7 862.8,414.6 863.3,414.5 863.8,414.5 864.3,414.4 864.9,414.3 865.4,414.2 865.9,414.1 866.4,414.0 867.0,414.0 867.5,414.0 868.0,414.0 868.5,414.0 869.1,414.0 869.6,414.0 870.1,414.0 870.6,414.0 871.1,414.0 871.6,414.0 872.2,414.0 872.7,414.0 873.2,414.0 873.7,414.0 874.2,414.0 874.7,414.0 875.2,414.0 875.7,414.0 876.3,414.0 876.8,414.0 877.3,414.0 877.8,414.0 878.3,414.0 878.8,414.0 879.4,414.0 879.9,414.0 880.4,414.0 880.9,414.0 881.4,414.0 881.9,414.0 882.5,414.0 883.0,414.0 883.5,414.0 884.0,414.0 884.5,414.0 885.1,414.0 885.6,414.0 886.1,414.0 886.6,414.0 887.2,414.0 887.7,414.0 888.2,414.0 888.7,414.0 889.3,414.0 889.8,414.0 890.3,414.0 890.8,414.0 891.4,414.0 891.9,414.0 892.4,414.0 893.0,414.0 893.5,414.0 894.0,414.0 894.5,414.0 895.1,414.0 895.6,414.0 896.1,414.0 896.7,414.0 897.2,414.0 897.7,414.0 898.2,414.0 898.7,414.0 899.2,414.0 899.8,414.0 900.3,414.0 900.8,414.0 901.3,414.0 901.8,414.0 902.3,414.0 902.8,414.0 903.3,414.0 903.8,414.0 904.4,414.0 904.9,414.0 905.4,414.0 905.9,414.0 906.4,414.0 906.9,414.0 907.4,414.0 907.9,414.0 908.4,414.0 908.9,414.0 909.4,414.0 909.9,414.0 910.4,414.0 911.0,414.0 911.5,414.0 912.0,414.0 912.5,414.0 913.0,414.0 913.5,414.0 914.0,414.0 914.5,414.0 915.0,414.0 915.5,414.0 916.0,414.0 916.6,414.0 917.1,414.0 917.6,414.0 918.1,414.0 918.7,414.0 919.2,414.0 919.7,414.0 920.2,414.0 920.8,414.0 921.3,414.0 921.8,414.0 922.3,414.0 922.9,414.0 923.4,414.0 923.9,414.0 924.4,414.0 924.9,414.0 925.5,414.0 926.0,414.0 926.5,414.0 927.0,414.0 927.5,414.0 928.0,414.0 928.5,414.0 929.1,414.0 929.6,414.0 930.1,414.0 930.6,414.0 931.1,414.0 931.6,414.0 932.1,414.0 932.6,414.0 933.2,414.0 933.7,414.0 934.2,414.0 934.7,414.0 935.2,414.0 935.7,414.0 936.3,414.0 936.8,414.0 937.3,414.0 937.8,414.0 938.4,414.0 938.9,414.0 939.4,414.0 939.9,414.0 940.5,414.0 941.0,414.0 941.5,414.0 942.0,414.0 942.6,414.0 943.1,414.0 943.6,414.0 944.2,414.0 944.7,414.0 945.2,414.0 945.8,414.0 946.3,414.0 946.8,414.0 947.3,414.0 947.9,414.0 948.4,414.0 948.9,414.0 949.4,414.0 949.9,414.0 950.4,414.0 950.9,414.0 951.4,414.0 951.9,414.0 952.4,414.0 952.9,414.0 953.4,414.0 953.9,414.0 954.4,414.0 954.9,414.0 955.4,414.0 955.9,414.0 956.4,414.0 956.9,414.0 957.5,414.0 958.0,414.0 958.5,414.0 959.0,414.0 959.5,414.0 960.0,414.0 960.5,414.0 961.0,414.0 961.5,414.0 962.1,414.0 962.6,414.0 963.1,414.0 963.6,414.0 964.1,414.0 964.6,414.0 965.2,414.0 965.7,414.0 966.2,414.0 966.8,414.0 967.3,414.0 967.8,414.0 968.3,414.0 968.9,414.0 969.4,414.0 970.0,414.0 970.5,414.0 971.0,414.0 971.6,414.0 972.2,414.0 972.7,414.0 973.2,414.0 973.7,414.0 974.3,414.0 974.8,414.0 975.3,414.0 975.3,430.5 699.5,430.5" fill="#8b0000" fill-opacity=".40"/><path clip-path="url(#cpB)" d="M699.5 431V417M703.5 431V417M708.5 431V417M712.5 431V417M716.5 431V417M720.5 431V417M724.5 431V417M728.5 431V417M732.5 431V417M736.5 431V417M740.5 431V417M744.5 431V417M748.5 431V417M752.5 431V417M756.5 431V417M760.5 431V417M764.5 431V417M769.5 431V417M773.5 431V417M777.5 431V417M781.5 431V417M785.5 431V417M789.5 431V417M793.5 431V417M797.5 431V417M801.5 431V417M805.5 431V417M809.5 431V417M813.5 431V417M817.5 431V417M821.5 431V417M825.5 431V417M829.5 431V417M834.5 431V417M838.5 431V417M842.5 431V417M846.5 431V417M850.5 431V417M854.5 431V417M858.5 431V417M862.5 431V417M866.5 431V417M870.5 431V417M874.5 431V417M878.5 431V417M882.5 431V417M886.5 431V417M890.5 431V417M895.5 431V417M899.5 431V417M903.5 431V417M907.5 431V417M911.5 431V417M915.5 431V417M919.5 431V417M923.5 431V417M927.5 431V417M931.5 431V417M935.5 431V417M939.5 431V417M943.5 431V417M947.5 431V417M951.5 431V417M955.5 431V417M960.5 431V417M964.5 431V417M968.5 431V417M972.5 431V417" stroke="#ff0000" stroke-width="1" stroke-dasharray="2 1 3 1 3 1 3 1" shape-rendering="crispEdges"/><path clip-path="url(#cpB)" d="M699.500 414.500H975.300" stroke="#c6a2aa" stroke-width="1" stroke-dasharray="3.500 1"/><path d="M699.5 212V430M975.5 212V430" stroke="#000" stroke-width="1.200" stroke-dasharray="2.300 1.500"/><polyline transform="translate(0,.5)" points="651.0,425.4 654.8,423.7 659.2,424.3 666.3,421.5 673.9,421.2 680.5,424.0 686.0,424.5 691.4,426.5 699.6,428.1 703.5,426.5 710.0,427.6 718.8,427.6 727.5,424.3 738.5,424.8 748.3,420.4 756.0,418.8 760.4,418.8 769.1,421.2 776.8,420.4 785.5,411.1 792.1,396.9 796.5,384.3 800.0,383.8 803.9,379.1 806.6,383.0 810.5,388.9 814.4,391.6 819.7,398.8 825.0,411.9 828.2,421.1 832.8,425.7 846.0,427.0 861.7,426.4 873.5,426.1 881.4,425.7 886.7,423.7 894.5,424.8 902.4,423.7 911.6,425.7 926.0,426.1 937.9,427.9 957.6,427.7 969.4,427.7 976.0,428.3 981.2,428.3 985.4,426.9 991.5,428.2 1003.7,428.2 1012.0,428.2 1017.7,427.2 1027.4,427.2 1032.6,428.2 1051.9,428.2 1057.1,429.1 1070.2,427.4 1077.7,427.4" fill="none" stroke="#a52a2a" stroke-width="1.900" stroke-linejoin="round"/><polyline points="650.4,410.0 654.2,396.9 659.2,396.9 667.4,393.4 670.6,393.6 674.5,399.6 677.8,400.0 687.1,409.5 691.4,413.3 699.6,416.1 706.8,415.5 715.5,416.1 721.0,412.8 727.5,411.7 733.0,410.0 739.0,409.5 744.0,402.9 749.4,397.5 755.5,388.2 760.4,385.7 764.8,390.6 768.6,392.3 773.0,388.2 780.1,369.5 785.0,356.4 787.5,335.0 790.0,307.0 796.2,236.6 800.8,212.1 805.4,224.3 810.0,276.4 815.1,320.0 820.7,356.0 826.8,395.8 829.5,408.0 832.8,410.6 836.8,410.9 842.0,414.3 849.9,412.6 855.1,413.9 861.7,413.5 868.3,411.9 874.8,408.0 882.1,399.4 890.6,397.7 894.5,399.4 898.5,405.1 906.4,402.7 911.6,406.0 918.2,407.7 925.4,410.3 930.6,406.7 935.2,407.7 943.1,411.9 948.4,411.6 951.7,413.5 956.9,406.7 960.2,405.6 964.1,408.0 968.7,415.2 975.3,416.7 979.7,419.1 982.7,414.2 995.0,408.6 997.6,407.7 1001.1,409.9 1007.2,415.1 1012.5,418.2 1020.4,417.7 1024.7,420.4 1030.0,417.9 1036.1,420.4 1044.0,420.4 1056.2,422.6 1061.5,422.6 1070.2,418.2 1077.7,417.7" fill="none" stroke="#8a2be2" stroke-width="2" stroke-linejoin="round"/><polyline points="650.9,411.1 658.6,400.0 663.5,404.6 669.5,404.4 674.5,410.0 678.3,408.9 683.8,411.7 690.3,413.1 695.8,412.2 701.3,415.0 706.8,416.6 711.1,420.4 716.6,417.7 721.5,421.0 727.5,417.9 731.9,419.0 736.3,416.1 744.0,413.3 749.4,414.6 754.9,408.9 759.3,410.0 764.8,413.3 769.1,410.0 779.0,406.2 788.8,394.7 793.2,376.1 800.2,349.4 806.6,379.1 812.5,402.1 817.0,405.3 825.0,411.9 832.8,413.9 840.7,417.4 846.0,415.8 852.5,417.4 857.8,413.9 861.7,414.8 869.6,413.5 874.2,407.3 884.0,402.7 891.9,399.4 897.2,395.5 901.8,381.7 906.4,378.4 915.5,390.2 923.4,388.9 930.6,372.5 935.2,379.1 943.1,384.6 948.4,379.1 954.9,363.3 959.5,341.3 964.1,359.4 969.4,390.9 972.7,402.7 975.5,407.2 982.7,403.7 990.6,402.9 995.0,381.9 1000.2,375.3 1004.6,383.6 1008.6,399.8 1015.1,405.1 1020.4,400.7 1025.6,402.0 1032.2,398.9 1034.4,401.1 1040.5,415.6 1045.7,414.7 1052.7,419.5 1060.6,416.4 1065.9,417.7 1070.2,416.4 1073.7,417.3 1077.7,410.7" fill="none" stroke="#ff0000" stroke-width="3.200" stroke-linejoin="round"/><path d="M575 430.5H1146M580.5 425.0V436.0M721.5 425.0V436.0M862.5 425.0V436.0M1004.5 425.0V436.0M1145.5 425.0V436.0M608.5 428.0V433.0M637.5 428.0V433.0M665.5 428.0V433.0M693.5 428.0V433.0M750.5 428.0V433.0M778.5 428.0V433.0M806.5 428.0V433.0M834.5 428.0V433.0M891.5 428.0V433.0M919.5 428.0V433.0M947.5 428.0V433.0M975.5 428.0V433.0M1032.5 428.0V433.0M1060.5 428.0V433.0M1088.5 428.0V433.0M1116.5 428.0V433.0M580.5 165V430.5M575.0 430.5H586.0M575.0 397.5H586.0M575.0 364.5H586.0M575.0 331.5H586.0M575.0 298.5H586.0M575.0 265.5H586.0M575.0 232.5H586.0M575.0 198.5H586.0M575.0 165.5H586.0M578.0 424.5H583.0M578.0 417.5H583.0M578.0 410.5H583.0M578.0 404.5H583.0M578.0 391.5H583.0M578.0 384.5H583.0M578.0 377.5H583.0M578.0 371.5H583.0M578.0 357.5H583.0M578.0 351.5H583.0M578.0 344.5H583.0M578.0 338.5H583.0M578.0 324.5H583.0M578.0 318.5H583.0M578.0 311.5H583.0M578.0 304.5H583.0M578.0 291.5H583.0M578.0 285.5H583.0M578.0 278.5H583.0M578.0 271.5H583.0M578.0 258.5H583.0M578.0 251.5H583.0M578.0 245.5H583.0M578.0 238.5H583.0M578.0 225.5H583.0M578.0 218.5H583.0M578.0 212.5H583.0M578.0 205.5H583.0M578.0 192.5H583.0M578.0 185.5H583.0M578.0 179.5H583.0M578.0 172.5H583.0" stroke="#000" stroke-width="1" fill="none"/><rect x="580.500" y="125.500" width="509" height="33" fill="#fff" stroke="#000" stroke-width="1"/><path d="M584 135.500h28" stroke="#ff0000" stroke-width="3"/><path d="M584 149.500h28" stroke="#a52a2a" stroke-width="2"/><path d="M839 135.500h28" stroke="#8a2be2" stroke-width="2"/><path d="M785.300 206.500l11 3.500-11 3.500z" fill="#000"/><path d="M792 210h6" stroke="#000"/><rect x="840.400" y="169.800" width="44.600" height="30.700" fill="#fff" fill-opacity=".6"/><rect x="790.800" y="192.300" width="21.300" height="14.800" fill="#fff" fill-opacity=".7"/><rect x="978" y="402" width="18" height="15" fill="#fff" fill-opacity=".7"/></svg>
<span class="t" style="left:621.3px;top:127.5px;font-size:12px;line-height:16px;font-weight:400;color:#000;transform:scaleX(1.0198);">precursor - 601.7637++ (heavy)</span>
<span class="t" style="left:621.3px;top:141.5px;font-size:12px;line-height:16px;font-weight:400;color:#000;transform:scaleX(1.0126);">precursor [M+2] - 602.7644++ (heavy)</span>
<span class="t" style="left:875.6px;top:127.5px;font-size:12px;line-height:16px;font-weight:400;color:#000;transform:scaleX(1.0106);">precursor [M+1] - 602.2650++ (heavy)</span>
<span class="t" style="left:550.4px;top:421.1px;font-size:14.5px;line-height:18.5px;font-weight:400;color:#000;transform:scaleX(1.0000);">0</span>
<span class="t" style="left:542.3px;top:387.9px;font-size:14.5px;line-height:18.5px;font-weight:400;color:#000;transform:scaleX(1.0000);">100</span>
<span class="t" style="left:542.3px;top:354.8px;font-size:14.5px;line-height:18.5px;font-weight:400;color:#000;transform:scaleX(1.0000);">200</span>
<span class="t" style="left:542.3px;top:321.7px;font-size:14.5px;line-height:18.5px;font-weight:400;color:#000;transform:scaleX(1.0000);">300</span>
<span class="t" style="left:542.3px;top:288.6px;font-size:14.5px;line-height:18.5px;font-weight:400;color:#000;transform:scaleX(1.0000);">400</span>
<span class="t" style="left:542.3px;top:255.4px;font-size:14.5px;line-height:18.5px;font-weight:400;color:#000;transform:scaleX(1.0000);">500</span>
<span class="t" style="left:542.3px;top:222.3px;font-size:14.5px;line-height:18.5px;font-weight:400;color:#000;transform:scaleX(1.0000);">600</span>
<span class="t" style="left:542.3px;top:189.2px;font-size:14.5px;line-height:18.5px;font-weight:400;color:#000;transform:scaleX(1.0000);">700</span>
<span class="t" style="left:542.3px;top:156.1px;font-size:14.5px;line-height:18.5px;font-weight:400;color:#000;transform:scaleX(1.0000);">800</span>
<span class="t" style="left:570.1px;top:441.2px;font-size:14.5px;line-height:18.5px;font-weight:400;color:#000;transform:scaleX(1.0000);">1.5</span>
<span class="t" style="left:711.2px;top:441.2px;font-size:14.5px;line-height:18.5px;font-weight:400;color:#000;transform:scaleX(1.0000);">2.0</span>
<span class="t" style="left:852.3px;top:441.2px;font-size:14.5px;line-height:18.5px;font-weight:400;color:#000;transform:scaleX(1.0000);">2.5</span>
<span class="t" style="left:993.4px;top:441.2px;font-size:14.5px;line-height:18.5px;font-weight:400;color:#000;transform:scaleX(1.0000);">3.0</span>
<span class="t" style="left:1134.5px;top:441.2px;font-size:14.5px;line-height:18.5px;font-weight:400;color:#000;transform:scaleX(1.0000);">3.5</span>
<span class="t" style="left:810.8px;top:463.4px;font-size:14.2px;line-height:18.2px;font-weight:700;color:#000;transform:scaleX(1.0028);">Retention Time</span>
<span class="t" style="left:472.0px;top:287.9px;font-size:14.2px;line-height:18.2px;font-weight:700;color:#000;transform-origin:center;transform:rotate(-90deg) scaleX(1.0000);">Intensity (10^3)</span>
<span class="t" style="left:843.0px;top:168.8px;font-size:12.5px;line-height:16.5px;font-weight:400;color:#808080;transform:scaleX(1.0000);">Explicit</span>
<span class="t" style="left:854.1px;top:183.2px;font-size:12.5px;line-height:16.5px;font-weight:400;color:#808080;transform:scaleX(1.0000);">2.5</span>
<span class="t" style="left:791.6px;top:192.1px;font-size:12.5px;line-height:16.5px;font-weight:400;color:#8a2be2;transform:scaleX(1.0000);">2.3</span>
<span class="t" style="left:980.0px;top:401.8px;font-size:12.5px;line-height:16.5px;font-weight:400;color:#ff2020;transform:scaleX(1.0000);">68</span>
<svg class="b" style="left:506px;top:500px" width="663" height="389" viewBox="506 500 663 389"><rect x="755.900" y="565" width="223" height="264.500" fill="#fafad2"/><rect x="817.700" y="565" width="68.500" height="264.500" fill="#ede0d3"/><path d="M867.500 602.500V829" stroke="#7a7a7a" stroke-width="1"/><path d="M706.500 610.500V829M978.500 610.500V829" stroke="#000" stroke-width="1.200" stroke-dasharray="2.300 1.500"/><polyline transform="translate(0,.8)" points="656.7,828.7 662.4,745.6 665.9,810.6 669.0,786.8 673.8,799.5 677.8,810.6 681.3,780.8 685.2,828.7 689.7,828.7 693.7,823.3 697.6,828.7 701.6,828.7 705.2,799.2 709.0,828.7 713.5,828.7 734.1,828.7 738.1,801.1 741.7,751.1 745.2,762.2 749.2,797.9 753.2,824.9 757.9,804.3 761.3,690.2 765.2,778.0 766.4,820.0 770.4,820.0 774.8,828.7 780.0,828.7 785.3,800.8 792.3,804.6 801.4,804.5 805.5,756.8 809.5,823.3 817.5,810.0 821.6,793.2 825.6,818.0 829.6,720.8 833.6,815.0 838.4,787.0 842.2,828.7 883.2,824.0 886.5,744.8 890.3,761.4 894.2,824.0 902.0,824.0 906.5,790.0 910.5,701.8 914.4,806.0 917.0,828.7 922.2,659.6 926.2,738.1 930.5,726.9 934.5,792.0 938.5,642.3 942.4,791.5 946.4,763.5 950.7,751.1 954.5,702.2 958.5,802.7 962.5,828.7 983.2,828.7 987.2,809.4 990.6,739.2 995.5,828.7 998.6,768.9 1002.5,828.7 1006.5,732.9 1011.0,803.5 1014.4,804.3 1018.4,828.7 1026.3,828.7 1030.3,822.5 1034.3,828.7 1042.2,828.7 1046.2,811.0 1050.2,824.9 1054.6,780.8 1058.9,821.7 1062.9,822.5 1066.8,828.7 1071.6,828.7" fill="none" stroke="#7570b3" stroke-width="2" stroke-linejoin="round"/><polyline transform="translate(0,.8)" points="664.3,828.7 669.0,815.4 673.8,801.1 677.8,810.6 681.7,828.7 697.6,828.7 701.6,817.0 705.6,828.7 709.5,822.5 713.5,828.7 717.5,805.1 721.4,828.7 725.9,768.9 729.4,821.7 733.3,798.7 737.3,823.3 740.5,821.7 745.2,828.7 753.2,823.3 757.9,805.1 761.9,828.7 769.8,791.6 773.8,713.8 777.8,769.4 781.7,828.7 786.5,817.0 789.4,805.1 793.4,787.0 797.4,823.2 805.5,820.5 813.5,828.7 817.5,804.4 821.6,817.9 825.6,828.7 829.6,817.9 833.6,828.7 838.4,821.9 842.2,815.2 846.2,828.7 863.1,828.7 866.6,823.2 870.6,828.7 930.5,828.7 934.5,816.2 938.5,828.7 954.5,822.9 958.5,828.7 969.7,828.7 974.5,811.4 978.7,828.7 995.5,828.7 998.6,817.0 1002.5,828.7 1026.3,828.7 1030.3,822.5 1034.3,828.7 1058.9,828.7 1062.9,786.8 1066.8,828.7 1074.8,828.7 1078.7,799.2" fill="none" stroke="#ffa500" stroke-width="1.8" stroke-linejoin="round"/><polyline transform="translate(0,.8)" points="656.7,822.5 661.4,727.3 665.9,758.3 669.8,786.0 673.5,781.3 677.8,804.3 681.7,817.0 685.7,745.2 689.7,809.8 693.7,793.2 697.6,786.8 701.1,828.7 705.6,810.6 709.5,805.1 713.5,828.7 718.3,828.7 729.4,828.7 733.3,810.6 737.3,828.7 741.7,787.1 746.0,799.5 750.0,828.7 753.7,805.1 757.9,828.7 761.9,824.9 765.9,775.7 769.8,828.7 773.8,801.1 777.8,751.1 781.7,828.7 786.5,821.0 789.4,801.5 793.4,769.0 797.4,815.0 802.0,793.0 805.5,797.8 809.5,828.7 817.5,828.7 825.6,787.0 829.6,797.8 833.6,682.5 838.4,612.0 842.2,665.0 846.2,712.8 850.2,683.8 854.5,695.9 858.6,775.0 866.6,786.2 870.6,780.9 874.4,809.8 878.7,793.2 882.7,817.9 887.2,828.7 902.0,828.7 906.5,769.0 910.6,828.7 914.9,811.0 918.5,828.7 922.2,781.4 926.2,818.4 930.5,828.7 938.3,828.7 942.4,800.5 946.4,781.4 950.7,828.7 954.5,825.2 958.5,805.0 962.5,828.7 966.4,811.7 969.7,828.7 975.3,822.9 978.7,809.4 982.1,828.7 986.5,809.4 990.6,805.0 994.4,828.7 998.0,815.0 1002.5,805.0 1006.5,809.0 1010.5,828.7 1014.4,828.7 1018.4,793.0 1022.4,828.7 1026.3,828.7 1030.3,804.6 1034.3,828.7 1038.3,815.4 1042.2,804.6 1046.2,828.7 1051.0,823.3 1054.1,828.7 1066.8,828.7 1070.8,822.5 1074.4,828.7 1078.7,805.6" fill="none" stroke="#008000" stroke-width="2" stroke-linejoin="round"/><polyline transform="translate(0,.8)" points="656.7,828.7 665.9,828.7 669.8,787.1 673.8,828.7 677.8,828.7 681.7,785.2 685.7,817.0 689.7,828.7 693.7,817.0 697.6,780.8 701.6,828.7 719.8,828.7 724.6,817.0 729.4,793.2 733.3,828.7 740.5,828.7 745.2,805.1 750.0,828.7 757.9,828.7 761.9,817.0 767.5,828.7 773.8,828.7 777.8,811.4 781.7,828.7 785.4,787.0 789.4,828.7 837.6,828.7 842.2,763.0 846.2,828.7 870.6,828.7 874.4,775.0 878.7,828.7 891.2,828.7 895.5,823.5 897.9,828.7 902.4,828.7 906.5,817.3 910.5,828.7 950.7,828.7 954.5,809.4 958.5,769.0 962.5,800.5 966.4,828.7 969.7,822.9 974.2,828.7 994.4,828.7 998.4,774.8 1002.5,828.7 1010.5,828.7 1014.4,821.7 1018.4,828.7 1022.4,828.7 1026.3,804.6 1030.3,828.7 1038.3,828.7 1042.2,804.6 1046.2,828.7 1070.8,828.7 1074.4,799.2" fill="none" stroke="#008b8b" stroke-width="1.9" stroke-linejoin="round"/><polyline transform="translate(0,.8)" points="656.7,828.7 661.4,805.1 665.9,828.7 669.8,817.0 673.8,798.7 677.8,810.6 681.7,828.7 685.7,822.5 689.7,828.7 757.9,828.7 761.9,822.5 765.9,828.7 789.4,828.7 797.4,817.9 801.4,823.2 805.5,804.5 809.5,828.7 821.6,828.7 829.6,799.0 833.6,828.7 838.4,823.2 842.2,787.0 846.2,828.7 870.6,828.7 874.4,823.2 878.7,828.7 913.6,828.7 918.1,805.4 922.2,828.7 926.2,828.7 930.5,798.7 934.5,828.7 938.5,822.9 942.4,805.0 946.4,828.7 950.7,828.7 954.5,796.0 958.5,779.2 962.5,775.4 966.4,828.7 995.5,828.7 998.6,822.5 1002.5,828.7 1006.5,811.0 1010.5,828.7 1014.4,828.7 1018.4,780.8 1022.4,828.7 1074.8,828.7 1078.7,823.0" fill="none" stroke="#d2691e" stroke-width="2" stroke-linejoin="round"/><path d="M584 829.5H1146M589.5 824.0V835.0M728.5 824.0V835.0M867.5 824.0V835.0M1006.5 824.0V835.0M1145.5 824.0V835.0M617.5 827.0V832.0M645.5 827.0V832.0M672.5 827.0V832.0M700.5 827.0V832.0M756.5 827.0V832.0M784.5 827.0V832.0M811.5 827.0V832.0M839.5 827.0V832.0M895.5 827.0V832.0M923.5 827.0V832.0M950.5 827.0V832.0M978.5 827.0V832.0M1034.5 827.0V832.0M1062.5 827.0V832.0M1089.5 827.0V832.0M1117.5 827.0V832.0M589.5 564V829.5M584.0 829.5H595.0M584.0 763.5H595.0M584.0 697.5H595.0M584.0 631.5H595.0M584.0 564.5H595.0M587.0 816.5H592.0M587.0 803.5H592.0M587.0 790.5H592.0M587.0 776.5H592.0M587.0 750.5H592.0M587.0 737.5H592.0M587.0 723.5H592.0M587.0 710.5H592.0M587.0 684.5H592.0M587.0 670.5H592.0M587.0 657.5H592.0M587.0 644.5H592.0M587.0 617.5H592.0M587.0 604.5H592.0M587.0 591.5H592.0M587.0 578.5H592.0" stroke="#000" stroke-width="1" fill="none"/><rect x="589.500" y="524.500" width="542" height="33" fill="#fff" stroke="#000" stroke-width="1"/><path d="M593 534.5h27.500" stroke="#d2691e" stroke-width="2"/><path d="M593 548.5h27.500" stroke="#ffa500" stroke-width="2"/><path d="M773 534.5h27.500" stroke="#008b8b" stroke-width="2"/><path d="M773 548.5h27.500" stroke="#7570b3" stroke-width="2"/><path d="M953.8 534.5h27.500" stroke="#008000" stroke-width="2"/><path d="M823 606l11 3.500-11 3.500z" fill="#000"/><path d="M829 609.500h6" stroke="#000"/><rect x="846" y="569.300" width="43" height="29" fill="#fff" fill-opacity=".6"/><rect x="827.900" y="592.300" width="21.300" height="14.800" fill="#fff" fill-opacity=".7"/></svg>
<span class="t" style="left:629.0px;top:526.5px;font-size:12px;line-height:16px;font-weight:400;color:#000;transform:scaleX(1.0182);">y8 - 955.4574+ (heavy)</span>
<span class="t" style="left:629.0px;top:540.5px;font-size:12px;line-height:16px;font-weight:400;color:#000;transform:scaleX(1.0247);">b2 - 248.0700+ (heavy)</span>
<span class="t" style="left:810.3px;top:526.5px;font-size:12px;line-height:16px;font-weight:400;color:#000;transform:scaleX(1.0141);">y6 - 739.3827+ (heavy)</span>
<span class="t" style="left:810.3px;top:540.5px;font-size:12px;line-height:16px;font-weight:400;color:#000;transform:scaleX(1.0183);">b4 - 464.1446+ (heavy)</span>
<span class="t" style="left:991.0px;top:526.5px;font-size:12px;line-height:16px;font-weight:400;color:#000;transform:scaleX(1.0171);">y6 - 370.1950++ (heavy)</span>
<span class="t" style="left:554.5px;top:820.0px;font-size:14.5px;line-height:18.5px;font-weight:400;color:#000;transform:scaleX(1.0000);">0</span>
<span class="t" style="left:546.4px;top:753.8px;font-size:14.5px;line-height:18.5px;font-weight:400;color:#000;transform:scaleX(1.0000);">500</span>
<span class="t" style="left:542.4px;top:687.5px;font-size:14.5px;line-height:18.5px;font-weight:400;color:#000;transform:scaleX(1.0000);">1000</span>
<span class="t" style="left:542.4px;top:621.3px;font-size:14.5px;line-height:18.5px;font-weight:400;color:#000;transform:scaleX(1.0000);">1500</span>
<span class="t" style="left:542.4px;top:555.0px;font-size:14.5px;line-height:18.5px;font-weight:400;color:#000;transform:scaleX(1.0000);">2000</span>
<span class="t" style="left:578.8px;top:839.2px;font-size:14.5px;line-height:18.5px;font-weight:400;color:#000;transform:scaleX(1.0000);">1.5</span>
<span class="t" style="left:717.8px;top:839.2px;font-size:14.5px;line-height:18.5px;font-weight:400;color:#000;transform:scaleX(1.0000);">2.0</span>
<span class="t" style="left:856.8px;top:839.2px;font-size:14.5px;line-height:18.5px;font-weight:400;color:#000;transform:scaleX(1.0000);">2.5</span>
<span class="t" style="left:995.8px;top:839.2px;font-size:14.5px;line-height:18.5px;font-weight:400;color:#000;transform:scaleX(1.0000);">3.0</span>
<span class="t" style="left:1134.8px;top:839.2px;font-size:14.5px;line-height:18.5px;font-weight:400;color:#000;transform:scaleX(1.0000);">3.5</span>
<span class="t" style="left:815.8px;top:862.2px;font-size:14.2px;line-height:18.2px;font-weight:700;color:#000;transform:scaleX(1.0028);">Retention Time</span>
<span class="t" style="left:494.8px;top:687.9px;font-size:14.2px;line-height:18.2px;font-weight:700;color:#000;transform-origin:center;transform:rotate(-90deg) scaleX(1.0000);">Intensity</span>
<span class="t" style="left:847.5px;top:568.2px;font-size:12.5px;line-height:16.5px;font-weight:400;color:#808080;transform:scaleX(1.0000);">Explicit</span>
<span class="t" style="left:858.6px;top:582.2px;font-size:12.5px;line-height:16.5px;font-weight:400;color:#808080;transform:scaleX(1.0000);">2.5</span>
<span class="t" style="left:829.3px;top:591.8px;font-size:12.5px;line-height:16.5px;font-weight:400;color:#008000;transform:scaleX(1.0000);">2.4</span>
<div class="b" style="left:1173px;top:80px;width:565px;height:1px;background:#8e8e8e;"></div>
<div class="b" style="left:1173px;top:80px;width:1px;height:811px;background:#a0a0a0;"></div>
<div class="b" style="left:1174px;top:81px;width:563px;height:17px;background:#c0c0c0;"></div>
<div class="b" style="left:1174px;top:98px;width:563px;height:770px;background:#fff;"></div>
<span class="t" style="left:1179.6px;top:80.8px;font-size:12.5px;line-height:16.5px;font-weight:400;color:#000;transform:scaleX(0.9262);">Peak Areas - Replicate Comparison</span>
<svg class="b" style="left:1701px;top:82px" width="34" height="15" viewBox="0 0 34 15">
<path d="M6 2.500h5M6.500 2.500v6M10.500 2.500v6M9.500 2.500v6M5 8.500h7M8.500 8.500v3.600" stroke="#000" fill="none"/>
<path d="M21.500 3l8 8M29.500 3l-8 8" stroke="#000" stroke-width="1.400"/></svg>
<svg class="b" style="left:1175px;top:98px" width="562" height="400" viewBox="1175 98 562 400" shape-rendering="crispEdges"><rect x="1622.500" y="225.500" width="48" height="120.0" fill="#fff" stroke="#000" stroke-width="1"/><rect x="1244.0" y="171" width="24" height="24.2" fill="#a52a2a"/><rect x="1244.0" y="195.2" width="24" height="48.0" fill="#8a2be2"/><rect x="1244.0" y="243.2" width="24" height="102.3" fill="#ff0000"/><rect x="1293.0" y="220" width="24" height="16.0" fill="#a52a2a"/><rect x="1293.0" y="236" width="24" height="98.9" fill="#8a2be2"/><rect x="1293.0" y="334.9" width="24" height="10.6" fill="#ff0000"/><rect x="1342.0" y="206.9" width="24" height="19.3" fill="#a52a2a"/><rect x="1342.0" y="226.2" width="24" height="95.6" fill="#8a2be2"/><rect x="1342.0" y="321.8" width="24" height="23.7" fill="#ff0000"/><rect x="1391.0" y="256.9" width="24" height="13.1" fill="#a52a2a"/><rect x="1391.0" y="270" width="24" height="56.7" fill="#8a2be2"/><rect x="1391.0" y="326.7" width="24" height="18.8" fill="#ff0000"/><rect x="1440.0" y="171" width="24" height="28.1" fill="#a52a2a"/><rect x="1440.0" y="199.1" width="24" height="101.5" fill="#8a2be2"/><rect x="1440.0" y="300.6" width="24" height="44.9" fill="#ff0000"/><rect x="1488.0" y="173.9" width="24" height="21.3" fill="#a52a2a"/><rect x="1488.0" y="195.2" width="24" height="100.7" fill="#8a2be2"/><rect x="1488.0" y="295.9" width="24" height="49.6" fill="#ff0000"/><rect x="1537.0" y="198.1" width="24" height="23.9" fill="#a52a2a"/><rect x="1537.0" y="222" width="24" height="77.6" fill="#8a2be2"/><rect x="1537.0" y="299.6" width="24" height="45.9" fill="#ff0000"/><rect x="1586.0" y="188" width="24" height="17.9" fill="#a52a2a"/><rect x="1586.0" y="205.9" width="24" height="124.8" fill="#8a2be2"/><rect x="1586.0" y="330.7" width="24" height="14.8" fill="#ff0000"/><rect x="1635.0" y="225.6" width="24" height="4.5" fill="#a52a2a"/><rect x="1635.0" y="230.1" width="24" height="115.4" fill="#8a2be2"/><rect x="1684.0" y="240.9" width="24" height="2.0" fill="#a52a2a"/><rect x="1684.0" y="242.9" width="24" height="102.6" fill="#8a2be2"/><path d="M1231.500 158V345.5M1226 345.5H1720M1226 345.5H1237M1226 322.5H1237M1226 298.5H1237M1226 275.5H1237M1226 251.5H1237M1226 228.5H1237M1226 205.5H1237M1226 181.5H1237M1226 158.5H1237M1229 340.5H1234M1229 336.5H1234M1229 331.5H1234M1229 326.5H1234M1229 317.5H1234M1229 312.5H1234M1229 308.5H1234M1229 303.5H1234M1229 293.5H1234M1229 289.5H1234M1229 284.5H1234M1229 279.5H1234M1229 270.5H1234M1229 265.5H1234M1229 261.5H1234M1229 256.5H1234M1229 247.5H1234M1229 242.5H1234M1229 237.5H1234M1229 233.5H1234M1229 223.5H1234M1229 219.5H1234M1229 214.5H1234M1229 209.5H1234M1229 200.5H1234M1229 195.5H1234M1229 190.5H1234M1229 186.5H1234M1229 176.5H1234M1229 172.5H1234M1229 167.5H1234M1229 162.5H1234M1255.5 340.0V350.0M1304.5 340.0V350.0M1353.5 340.0V350.0M1402.5 340.0V350.0M1451.5 340.0V350.0M1499.5 340.0V350.0M1548.5 340.0V350.0M1597.5 340.0V350.0M1646.5 340.0V350.0M1695.5 340.0V350.0" stroke="#000" stroke-width="1" fill="none"/><rect x="1231.500" y="118.500" width="420" height="32.500" fill="#fff" stroke="#000"/><rect x="1235" y="125" width="28" height="7" fill="#ff0000"/><rect x="1235" y="139" width="28" height="7" fill="#a52a2a"/><rect x="1445" y="125" width="28" height="7" fill="#8a2be2"/></svg>
<span class="t" style="left:1271.3px;top:120.8px;font-size:12.5px;line-height:16.5px;font-weight:400;color:#000;transform:scaleX(0.9760);">precursor - 601.7637++</span>
<span class="t" style="left:1271.3px;top:135.2px;font-size:12.5px;line-height:16.5px;font-weight:400;color:#000;transform:scaleX(0.9696);">precursor [M+2] - 602.7644++</span>
<span class="t" style="left:1481.4px;top:120.8px;font-size:12.5px;line-height:16.5px;font-weight:400;color:#000;transform:scaleX(0.9666);">precursor [M+1] - 602.2650++</span>
<span class="t" style="left:1210.1px;top:336.2px;font-size:14.5px;line-height:18.5px;font-weight:400;color:#000;transform:scaleX(1.0000);">0</span>
<span class="t" style="left:1210.1px;top:312.8px;font-size:14.5px;line-height:18.5px;font-weight:400;color:#000;transform:scaleX(1.0000);">1</span>
<span class="t" style="left:1210.1px;top:289.4px;font-size:14.5px;line-height:18.5px;font-weight:400;color:#000;transform:scaleX(1.0000);">2</span>
<span class="t" style="left:1210.1px;top:266.0px;font-size:14.5px;line-height:18.5px;font-weight:400;color:#000;transform:scaleX(1.0000);">3</span>
<span class="t" style="left:1210.1px;top:242.6px;font-size:14.5px;line-height:18.5px;font-weight:400;color:#000;transform:scaleX(1.0000);">4</span>
<span class="t" style="left:1210.1px;top:219.2px;font-size:14.5px;line-height:18.5px;font-weight:400;color:#000;transform:scaleX(1.0000);">5</span>
<span class="t" style="left:1210.1px;top:195.8px;font-size:14.5px;line-height:18.5px;font-weight:400;color:#000;transform:scaleX(1.0000);">6</span>
<span class="t" style="left:1210.1px;top:172.4px;font-size:14.5px;line-height:18.5px;font-weight:400;color:#000;transform:scaleX(1.0000);">7</span>
<span class="t" style="left:1210.1px;top:149.0px;font-size:14.5px;line-height:18.5px;font-weight:400;color:#000;transform:scaleX(1.0000);">8</span>
<span class="t" style="left:1229.7px;top:374.5px;font-size:12.0px;line-height:16.0px;font-weight:400;color:#000;transform-origin:center;transform:rotate(-90deg) scaleX(1.0000);">Expected</span>
<span class="t" style="left:1262.9px;top:390.2px;font-size:12.0px;line-height:16.0px;font-weight:400;color:#000;transform-origin:center;transform:rotate(-90deg) scaleX(1.0000);">Recom_Mono1</span>
<span class="t" style="left:1311.8px;top:390.2px;font-size:12.0px;line-height:16.0px;font-weight:400;color:#000;transform-origin:center;transform:rotate(-90deg) scaleX(1.0000);">Recom_Mono2</span>
<span class="t" style="left:1360.7px;top:390.2px;font-size:12.0px;line-height:16.0px;font-weight:400;color:#000;transform-origin:center;transform:rotate(-90deg) scaleX(1.0000);">Recom_Mono3</span>
<span class="t" style="left:1410.8px;top:389.0px;font-size:12.0px;line-height:16.0px;font-weight:400;color:#000;transform-origin:center;transform:rotate(-90deg) scaleX(1.0000);">Tryptic_Mono1</span>
<span class="t" style="left:1459.7px;top:389.0px;font-size:12.0px;line-height:16.0px;font-weight:400;color:#000;transform-origin:center;transform:rotate(-90deg) scaleX(1.0000);">Tryptic_Mono2</span>
<span class="t" style="left:1508.6px;top:389.0px;font-size:12.0px;line-height:16.0px;font-weight:400;color:#000;transform-origin:center;transform:rotate(-90deg) scaleX(1.0000);">Tryptic_Mono3</span>
<span class="t" style="left:1554.9px;top:391.5px;font-size:12.0px;line-height:16.0px;font-weight:400;color:#000;transform-origin:center;transform:rotate(-90deg) scaleX(1.0000);">Winged_Mono1</span>
<span class="t" style="left:1603.8px;top:391.5px;font-size:12.0px;line-height:16.0px;font-weight:400;color:#000;transform-origin:center;transform:rotate(-90deg) scaleX(1.0000);">Winged_Mono2</span>
<span class="t" style="left:1652.7px;top:391.5px;font-size:12.0px;line-height:16.0px;font-weight:400;color:#000;transform-origin:center;transform:rotate(-90deg) scaleX(1.0000);">Winged_Mono3</span>
<span class="t" style="left:1443.7px;top:449.2px;font-size:14.2px;line-height:18.2px;font-weight:700;color:#000;transform:scaleX(0.9938);">Replicate</span>
<span class="t" style="left:1134.8px;top:242.9px;font-size:14.2px;line-height:18.2px;font-weight:700;color:#000;transform-origin:center;transform:rotate(-90deg) scaleX(0.9800);">Peak Area (10^6)</span>
<svg class="b" style="left:1175px;top:498px" width="562" height="370" viewBox="1175 498 562 370" shape-rendering="crispEdges"><rect x="1614.500" y="731.500" width="52" height="3" fill="#fff" stroke="#000" stroke-width="1"/><rect x="1257.0" y="713.9" width="26" height="6.1" fill="#7570b3"/><rect x="1257.0" y="720" width="26" height="2.0" fill="#ffa500"/><rect x="1257.0" y="722" width="26" height="3.0" fill="#008000"/><rect x="1257.0" y="725" width="26" height="6.8" fill="#008b8b"/><rect x="1257.0" y="731.8" width="26" height="2.7" fill="#d2691e"/><rect x="1310.0" y="716.1" width="26" height="5.6" fill="#7570b3"/><rect x="1310.0" y="721.7" width="26" height="2.0" fill="#ffa500"/><rect x="1310.0" y="723.7" width="26" height="2.9" fill="#008000"/><rect x="1310.0" y="726.6" width="26" height="5.2" fill="#008b8b"/><rect x="1310.0" y="731.8" width="26" height="2.7" fill="#d2691e"/><rect x="1363.0" y="721" width="26" height="3.6" fill="#7570b3"/><rect x="1363.0" y="724.6" width="26" height="1.4" fill="#ffa500"/><rect x="1363.0" y="726" width="26" height="2.6" fill="#008000"/><rect x="1363.0" y="728.6" width="26" height="3.9" fill="#008b8b"/><rect x="1363.0" y="732.5" width="26" height="2.0" fill="#d2691e"/><rect x="1416.0" y="586.1" width="26" height="45.1" fill="#7570b3"/><rect x="1416.0" y="631.2" width="26" height="13.0" fill="#ffa500"/><rect x="1416.0" y="644.2" width="26" height="25.5" fill="#008000"/><rect x="1416.0" y="669.7" width="26" height="43.3" fill="#008b8b"/><rect x="1416.0" y="713" width="26" height="21.5" fill="#d2691e"/><rect x="1469.0" y="608.3" width="26" height="37.9" fill="#7570b3"/><rect x="1469.0" y="646.2" width="26" height="10.8" fill="#ffa500"/><rect x="1469.0" y="657" width="26" height="19.9" fill="#008000"/><rect x="1469.0" y="676.9" width="26" height="39.9" fill="#008b8b"/><rect x="1469.0" y="716.8" width="26" height="17.7" fill="#d2691e"/><rect x="1522.0" y="638" width="26" height="25.9" fill="#7570b3"/><rect x="1522.0" y="663.9" width="26" height="10.1" fill="#ffa500"/><rect x="1522.0" y="674" width="26" height="18.0" fill="#008000"/><rect x="1522.0" y="692" width="26" height="29.0" fill="#008b8b"/><rect x="1522.0" y="721" width="26" height="13.5" fill="#d2691e"/><rect x="1575.0" y="732.3" width="26" height="0.3" fill="#7570b3"/><rect x="1575.0" y="732.6" width="26" height="0.2" fill="#ffa500"/><rect x="1575.0" y="732.8" width="26" height="0.8" fill="#008000"/><rect x="1575.0" y="733.6" width="26" height="0.7" fill="#008b8b"/><rect x="1575.0" y="734.3" width="26" height="0.2" fill="#d2691e"/><rect x="1628.0" y="732.8" width="26" height="0.2" fill="#7570b3"/><rect x="1628.0" y="733" width="26" height="0.2" fill="#ffa500"/><rect x="1628.0" y="733.2" width="26" height="0.6" fill="#008000"/><rect x="1628.0" y="733.8" width="26" height="0.6" fill="#008b8b"/><rect x="1628.0" y="734.4" width="26" height="0.1" fill="#d2691e"/><rect x="1681.0" y="732.3" width="26" height="0.3" fill="#7570b3"/><rect x="1681.0" y="732.6" width="26" height="0.2" fill="#ffa500"/><rect x="1681.0" y="732.8" width="26" height="0.8" fill="#008000"/><rect x="1681.0" y="733.6" width="26" height="0.7" fill="#008b8b"/><rect x="1681.0" y="734.3" width="26" height="0.2" fill="#d2691e"/><path d="M1244.500 548V734.5M1239 734.5H1720M1239 734.5H1250M1239 688.5H1250M1239 641.5H1250M1239 595.5H1250M1239 548.5H1250M1242 725.5H1247M1242 716.5H1247M1242 706.5H1247M1242 697.5H1247M1242 678.5H1247M1242 669.5H1247M1242 660.5H1247M1242 651.5H1247M1242 632.5H1247M1242 623.5H1247M1242 613.5H1247M1242 604.5H1247M1242 585.5H1247M1242 576.5H1247M1242 567.5H1247M1242 558.5H1247M1270.5 730.0V740.0M1323.5 730.0V740.0M1376.5 730.0V740.0M1429.5 730.0V740.0M1482.5 730.0V740.0M1535.5 730.0V740.0M1588.5 730.0V740.0M1641.5 730.0V740.0M1694.5 730.0V740.0" stroke="#000" stroke-width="1" fill="none"/><rect x="1244.500" y="508.500" width="408" height="33" fill="#fff" stroke="#000"/><rect x="1248.4" y="514.6" width="27.800" height="7" fill="#d2691e"/><rect x="1248.4" y="528.7" width="27.800" height="7" fill="#ffa500"/><rect x="1384" y="514.6" width="27.800" height="7" fill="#008b8b"/><rect x="1384" y="528.7" width="27.800" height="7" fill="#7570b3"/><rect x="1520.3" y="514.6" width="27.800" height="7" fill="#008000"/></svg>
<span class="t" style="left:1284.4px;top:510.0px;font-size:12.5px;line-height:16.5px;font-weight:400;color:#000;transform:scaleX(0.9755);">y8 - 955.4574+</span>
<span class="t" style="left:1284.4px;top:524.1px;font-size:12.5px;line-height:16.5px;font-weight:400;color:#000;transform:scaleX(0.9828);">b2 - 248.0700+</span>
<span class="t" style="left:1420.0px;top:510.0px;font-size:12.5px;line-height:16.5px;font-weight:400;color:#000;transform:scaleX(0.9755);">y6 - 739.3827+</span>
<span class="t" style="left:1420.0px;top:524.1px;font-size:12.5px;line-height:16.5px;font-weight:400;color:#000;transform:scaleX(0.9792);">b4 - 464.1446+</span>
<span class="t" style="left:1556.3px;top:510.0px;font-size:12.5px;line-height:16.5px;font-weight:400;color:#000;transform:scaleX(0.9687);">y6 - 370.1950++</span>
<span class="t" style="left:1216.5px;top:725.2px;font-size:14.5px;line-height:18.5px;font-weight:400;color:#000;transform:scaleX(1.0000);">0</span>
<span class="t" style="left:1210.4px;top:678.8px;font-size:14.5px;line-height:18.5px;font-weight:400;color:#000;transform:scaleX(1.0000);">0.5</span>
<span class="t" style="left:1216.5px;top:632.2px;font-size:14.5px;line-height:18.5px;font-weight:400;color:#000;transform:scaleX(1.0000);">1</span>
<span class="t" style="left:1210.4px;top:585.8px;font-size:14.5px;line-height:18.5px;font-weight:400;color:#000;transform:scaleX(1.0000);">1.5</span>
<span class="t" style="left:1216.5px;top:539.2px;font-size:14.5px;line-height:18.5px;font-weight:400;color:#000;transform:scaleX(1.0000);">2</span>
<span class="t" style="left:1229.1px;top:779.9px;font-size:12.0px;line-height:16.0px;font-weight:400;color:#000;transform-origin:center;transform:rotate(-90deg) scaleX(1.0000);">Recom_Mono1</span>
<span class="t" style="left:1282.1px;top:779.9px;font-size:12.0px;line-height:16.0px;font-weight:400;color:#000;transform-origin:center;transform:rotate(-90deg) scaleX(1.0000);">Recom_Mono2</span>
<span class="t" style="left:1335.0px;top:779.9px;font-size:12.0px;line-height:16.0px;font-weight:400;color:#000;transform-origin:center;transform:rotate(-90deg) scaleX(1.0000);">Recom_Mono3</span>
<span class="t" style="left:1389.2px;top:778.7px;font-size:12.0px;line-height:16.0px;font-weight:400;color:#000;transform-origin:center;transform:rotate(-90deg) scaleX(1.0000);">Tryptic_Mono1</span>
<span class="t" style="left:1442.1px;top:778.7px;font-size:12.0px;line-height:16.0px;font-weight:400;color:#000;transform-origin:center;transform:rotate(-90deg) scaleX(1.0000);">Tryptic_Mono2</span>
<span class="t" style="left:1495.1px;top:778.7px;font-size:12.0px;line-height:16.0px;font-weight:400;color:#000;transform-origin:center;transform:rotate(-90deg) scaleX(1.0000);">Tryptic_Mono3</span>
<span class="t" style="left:1545.5px;top:781.2px;font-size:12.0px;line-height:16.0px;font-weight:400;color:#000;transform-origin:center;transform:rotate(-90deg) scaleX(1.0000);">Winged_Mono1</span>
<span class="t" style="left:1598.4px;top:781.2px;font-size:12.0px;line-height:16.0px;font-weight:400;color:#000;transform-origin:center;transform:rotate(-90deg) scaleX(1.0000);">Winged_Mono2</span>
<span class="t" style="left:1651.4px;top:781.2px;font-size:12.0px;line-height:16.0px;font-weight:400;color:#000;transform-origin:center;transform:rotate(-90deg) scaleX(1.0000);">Winged_Mono3</span>
<span class="t" style="left:1450.4px;top:837.9px;font-size:14.2px;line-height:18.2px;font-weight:700;color:#000;transform:scaleX(0.9938);">Replicate</span>
<span class="t" style="left:1134.8px;top:631.9px;font-size:14.2px;line-height:18.2px;font-weight:700;color:#000;transform-origin:center;transform:rotate(-90deg) scaleX(0.9800);">Peak Area (10^6)</span>
<div class="b" style="left:1174px;top:867px;width:563px;height:1px;background:#8c8c8c;"></div>
<div class="b" style="left:1174px;top:868px;width:563px;height:23px;background:linear-gradient(to right,#f0f0f0,#fcfcfc);"></div>
<div class="b" style="left:1174px;top:870px;width:563px;height:1px;background:#a0a0a0;"></div>
<div class="b" style="left:1174px;top:868px;width:206px;height:3px;background:#fcfcfc;"></div>
<div class="b" style="left:1174px;top:870px;width:207px;height:21px;background:#fcfcfc;border-right:1px solid #a0a0a0;border-bottom:1px solid #a0a0a0;border-radius:0 0 3px 0;"></div>
<svg class="b" style="left:1176px;top:873px" width="17" height="16" viewBox="0 0 17 16">
<path d="M4.500 .5h7l3.500 3.500v11h-10.500z" fill="#f2f5fc" stroke="#8da4cc"/><path d="M11.500 .5v3.500h3.500" fill="#dfe7f6" stroke="#8da4cc"/>
<path d="M.3 8.500h7.400" stroke="#1c5aa6" stroke-width="1.200"/><path d="M2.300 2.200l.5 1.600v4.200h-1v-4.200z" fill="#1c5aa6" stroke="#1c5aa6" stroke-width=".7"/><path d="M.8 4h3" stroke="#1c5aa6" stroke-width=".9"/><path d="M4.300 8v-3h1v2h1v-2.500h1v3.500z" fill="#2563ba"/>
<path d="M9.500 2.500v9.500" stroke="#1a3ee0" stroke-width="1.200"/><path d="M8 14.500q1.500-4 2.500-1.500t2 1" fill="none" stroke="#e02020" stroke-width="1.100"/><rect x="12.500" y="12.500" width="1.300" height="1.300" fill="#1a3ee0"/></svg>
<span class="t" style="left:1194.5px;top:872.5px;font-size:12.5px;line-height:16.5px;font-weight:400;color:#000;transform:scaleX(0.9242);">Peak Areas - Replicate Comparison</span>
<svg class="b" style="left:1385px;top:873px" width="17" height="16" viewBox="0 0 17 16">
<path d="M4.500 .5h7l3.500 3.500v11h-10.500z" fill="#f2f5fc" stroke="#8da4cc"/><path d="M11.500 .5v3.500h3.500" fill="#dfe7f6" stroke="#8da4cc"/>
<path d="M.3 8.500h7.400" stroke="#1c5aa6" stroke-width="1.200"/><path d="M2.300 2.200l.5 1.600v4.200h-1v-4.200z" fill="#1c5aa6" stroke="#1c5aa6" stroke-width=".7"/><path d="M.8 4h3" stroke="#1c5aa6" stroke-width=".9"/><path d="M4.300 8v-3h1v2h1v-2.500h1v3.500z" fill="#2563ba"/>
<path d="M9.500 2.500v9.500" stroke="#1a3ee0" stroke-width="1.200"/><path d="M8 14.500q1.500-4 2.500-1.500t2 1" fill="none" stroke="#e02020" stroke-width="1.100"/><rect x="12.500" y="12.500" width="1.300" height="1.300" fill="#1a3ee0"/></svg>
<span class="t" style="left:1403.0px;top:872.5px;font-size:12.5px;line-height:16.5px;font-weight:400;color:#9a9aa8;transform:scaleX(0.9465);">Retention Times - Replicate Comparison</span>
<div class="b" style="left:1620px;top:873px;width:1px;height:15px;background:#555;"></div>
<span class="t" style="left:1490.3px;top:894.8px;font-size:12.5px;line-height:16.5px;font-weight:400;color:#000;transform:scaleX(0.9790);">2/2 prot</span>
<span class="t" style="left:1539.3px;top:894.8px;font-size:12.5px;line-height:16.5px;font-weight:400;color:#000;transform:scaleX(0.9266);">9/10 pep</span>
<span class="t" style="left:1592.2px;top:894.8px;font-size:12.5px;line-height:16.5px;font-weight:400;color:#000;transform:scaleX(0.9191);">15/16 prec</span>
<span class="t" style="left:1654.6px;top:894.8px;font-size:12.5px;line-height:16.5px;font-weight:400;color:#000;transform:scaleX(0.9151);">112/127 tran</span>
<svg class="b" style="left:1724px;top:899px" width="12" height="12"><path d="M9 1h2v2h-2zM9 5h2v2h-2zM9 9h2v2h-2zM5 5h2v2h-2zM5 9h2v2h-2zM1 9h2v2h-2z" fill="#a8a8a8"/></svg>
</body></html>
